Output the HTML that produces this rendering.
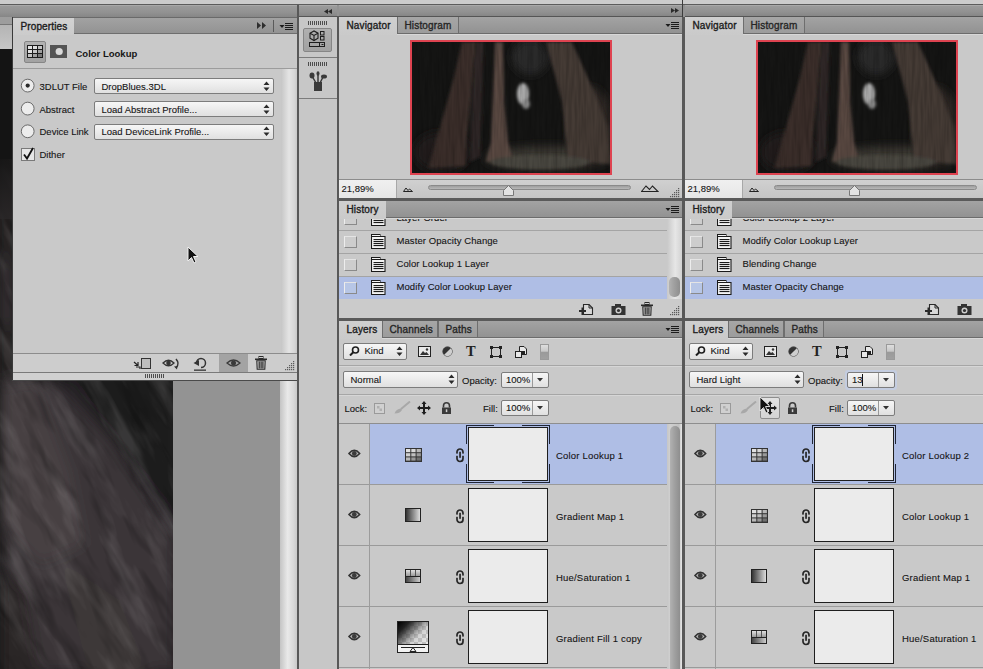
<!DOCTYPE html>
<html><head><meta charset="utf-8"><style>
html,body{margin:0;padding:0;width:983px;height:669px;overflow:hidden;position:relative;font-family:"Liberation Sans", sans-serif;}
.t{position:absolute;white-space:nowrap;}
</style></head><body>
<div style="position:absolute;left:0px;top:0px;width:983px;height:669px;background:#929292"></div><div style="position:absolute;left:0px;top:0px;width:983px;height:4px;background:#cccccc"></div><div style="position:absolute;left:0px;top:4px;width:983px;height:1px;background:#5c5c5c"></div><div style="position:absolute;left:0px;top:5px;width:297px;height:12px;background:linear-gradient(#b0b0b0 0px,#9a9a9a 1.5px,#929292 60%,#868686 100%)"></div><div style="position:absolute;left:0px;top:17px;width:12px;height:7px;background:#9d9d9d"></div><div style="position:absolute;left:0px;top:24px;width:12px;height:1px;background:#777"></div><div style="position:absolute;left:0px;top:25px;width:12px;height:24px;background:linear-gradient(#b4b4b4,#c6c6c6)"></div><div style="position:absolute;left:0px;top:49px;width:173px;height:620px;overflow:hidden"><svg width="173" height="620" viewBox="0 0 173 620" style="position:absolute;left:0;top:0"><defs><filter id="bb" x="-30%" y="-30%" width="160%" height="160%"><feGaussianBlur stdDeviation="7"/></filter><filter id="tx" x="0" y="0" width="100%" height="100%"><feTurbulence type="fractalNoise" baseFrequency="0.012 0.05" numOctaves="4" seed="11"/><feColorMatrix type="matrix" values="0 0 0 0 0.75  0 0 0 0 0.72  0 0 0 0 0.73  0 0 0 -3 1.55"/></filter><filter id="tx2" x="0" y="0" width="100%" height="100%"><feTurbulence type="fractalNoise" baseFrequency="0.015 0.07" numOctaves="3" seed="5"/><feColorMatrix type="matrix" values="0 0 0 0 0  0 0 0 0 0  0 0 0 0 0  0 0 0 -3 1.5"/></filter><linearGradient id="fadeTop" x1="0" y1="0" x2="0" y2="1"><stop offset="0" stop-color="#141414"/><stop offset="1" stop-color="#2a2728"/></linearGradient></defs><rect width="173" height="620" fill="#141414"/><g filter="url(#bb)"><polygon points="0,101 14,101 14,331 0,331" fill="#2e2b2c"/><polygon points="0,201 14,221 14,281 0,271" fill="#3a3637"/><polygon points="0,329 180,329 180,631 0,631" fill="#272425"/><polygon points="0,329 50,329 110,391 176,491 176,620 40,620 20,541 0,511" fill="#3a3638"/><polygon points="0,341 35,329 70,421 85,496 40,516 0,471" fill="#464143"/><polygon points="65,321 180,321 180,471 120,401" fill="#1f1d1e"/><polygon points="0,521 25,541 40,631 0,631" fill="#2a2728"/><polygon points="60,511 120,551 150,631 90,631" fill="#3c3739"/></g><g transform="rotate(62 86 450)"><rect x="-300" y="0" width="800" height="900" filter="url(#tx)" opacity="0.14"/><rect x="-300" y="0" width="800" height="900" filter="url(#tx2)" opacity="0.25"/></g><rect x="0" y="0" width="173" height="110" fill="#141414"/><rect x="0" y="110" width="173" height="60" fill="url(#fadeTop)" opacity="0.8"/></svg></div><div style="position:absolute;left:173px;top:380px;width:107px;height:289px;background:#939393"></div><div style="position:absolute;left:280px;top:380px;width:17px;height:289px;background:linear-gradient(90deg,#c4c4c4,#e9e9e9 45%,#d8d8d8 80%,#c9c9c9)"></div><div style="position:absolute;left:12px;top:17px;width:1px;height:364px;background:#3a3a3a"></div><div style="position:absolute;left:13px;top:17px;width:284px;height:363px;background:#c9c9c9"></div><div style="position:absolute;left:13px;top:17px;width:284px;height:17px;background:linear-gradient(#a3a3a3,#929292)"></div><div style="position:absolute;left:13px;top:33px;width:284px;height:1px;background:#6e6e6e"></div><div style="position:absolute;left:13px;top:17px;width:284px;height:1px;background:#6a6a6a"></div><div style="position:absolute;left:13px;top:18px;width:61px;height:17px;background:linear-gradient(#d2d2d2,#cbcbcb)"></div><div class="t" style="left:20.50px;top:21.54px;font-size:10px;line-height:10px;font-weight:normal;color:#1c1c1c;letter-spacing:0.12px;-webkit-text-stroke:0.35px #1c1c1c;">Properties</div><svg style="position:absolute;left:256px;top:21px" width="12" height="10" viewBox="0 0 12 10"><path d="M1 1 L5 4.5 L1 8 Z M6 1 L10 4.5 L6 8 Z" fill="#2e2e2e"/></svg><div style="position:absolute;left:273px;top:20px;width:1px;height:12px;background:#5a5a5a"></div><svg style="position:absolute;left:279px;top:23px" width="14" height="9" viewBox="0 0 14 9"><path d="M0.5 2 L5.5 2 L3 5 Z" fill="#1c1c1c"/><rect x="6" y="0" width="8" height="1" fill="#1c1c1c"/><rect x="6" y="2" width="8" height="1" fill="#1c1c1c"/><rect x="6" y="4" width="8" height="1" fill="#1c1c1c"/><rect x="6" y="6" width="8" height="1" fill="#1c1c1c"/></svg><div style="position:absolute;left:24px;top:41px;width:22px;height:22px;background:linear-gradient(#b2b2b2,#a2a2a2);border:1px solid #868686;border-radius:2px;box-sizing:border-box"></div><svg style="position:absolute;left:27px;top:45px" width="16" height="13" viewBox="0 0 16 13"><rect x="0" y="0" width="16" height="13" fill="#1c1c1c"/><rect x="1" y="1" width="4" height="3" fill="#e4e4e4"/><rect x="6" y="1" width="4" height="3" fill="#e0e0e0"/><rect x="11" y="1" width="4" height="3" fill="#c4c4c4"/><rect x="1" y="5" width="4" height="3" fill="#e0e0e0"/><rect x="6" y="5" width="4" height="3" fill="#c4c4c4"/><rect x="11" y="5" width="4" height="3" fill="#a0a0a0"/><rect x="1" y="9" width="4" height="3" fill="#c4c4c4"/><rect x="6" y="9" width="4" height="3" fill="#a0a0a0"/><rect x="11" y="9" width="4" height="3" fill="#7a7a7a"/></svg><div style="position:absolute;left:50px;top:45px;width:17px;height:13px;background:#545454"></div><svg style="position:absolute;left:50px;top:45px" width="17" height="13" viewBox="0 0 17 13"><circle cx="9.2" cy="6.5" r="3.6" fill="#dadada"/></svg><div class="t" style="left:75.50px;top:49.46px;font-size:9.5px;line-height:9.5px;font-weight:bold;color:#161616;">Color Lookup</div><div style="position:absolute;left:13px;top:68px;width:284px;height:1px;background:#9c9c9c"></div><div style="position:absolute;left:281px;top:69px;width:16px;height:284px;background:linear-gradient(90deg,#c6c6c6,#e4e4e4 50%,#d6d6d6 85%,#c8c8c8)"></div><svg style="position:absolute;left:20px;top:77px" width="16" height="16" viewBox="0 0 16 16"><circle cx="7.7" cy="8.6" r="6.4" fill="#ececec" stroke="#6a6a6a" stroke-width="1"/><circle cx="7.7" cy="8.6" r="2.1" fill="#2a2a2a"/></svg><div class="t" style="left:39.50px;top:81.76px;font-size:9.5px;line-height:9.5px;font-weight:normal;color:#141414;-webkit-text-stroke:0.1px #141414;">3DLUT File</div><div style="position:absolute;left:94px;top:78px;width:180px;height:16px;background:linear-gradient(#f6f6f6,#e0e0e0);border:1px solid #7c7c7c;border-radius:2px;box-sizing:border-box"></div><div class="t" style="left:101.50px;top:81.76px;font-size:9.5px;line-height:9.5px;font-weight:normal;color:#141414;-webkit-text-stroke:0.1px #141414;">DropBlues.3DL</div><svg style="position:absolute;left:263px;top:81px" width="7" height="11" viewBox="0 0 7 11"><path d="M0.5 4 L3.5 0.5 L6.5 4 Z M0.5 6.5 L6.5 6.5 L3.5 10 Z" fill="#2a2a2a"/></svg><svg style="position:absolute;left:20px;top:100px" width="16" height="16" viewBox="0 0 16 16"><circle cx="7.7" cy="8.6" r="6.4" fill="#ececec" stroke="#6a6a6a" stroke-width="1"/></svg><div class="t" style="left:39.50px;top:104.76px;font-size:9.5px;line-height:9.5px;font-weight:normal;color:#141414;-webkit-text-stroke:0.1px #141414;">Abstract</div><div style="position:absolute;left:94px;top:101px;width:180px;height:16px;background:linear-gradient(#f6f6f6,#e0e0e0);border:1px solid #7c7c7c;border-radius:2px;box-sizing:border-box"></div><div class="t" style="left:101.50px;top:104.76px;font-size:9.5px;line-height:9.5px;font-weight:normal;color:#141414;-webkit-text-stroke:0.1px #141414;">Load Abstract Profile...</div><svg style="position:absolute;left:263px;top:104px" width="7" height="11" viewBox="0 0 7 11"><path d="M0.5 4 L3.5 0.5 L6.5 4 Z M0.5 6.5 L6.5 6.5 L3.5 10 Z" fill="#2a2a2a"/></svg><svg style="position:absolute;left:20px;top:123px" width="16" height="16" viewBox="0 0 16 16"><circle cx="7.7" cy="8.3" r="6.4" fill="#ececec" stroke="#6a6a6a" stroke-width="1"/></svg><div class="t" style="left:39.50px;top:127.46px;font-size:9.5px;line-height:9.5px;font-weight:normal;color:#141414;-webkit-text-stroke:0.1px #141414;">Device Link</div><div style="position:absolute;left:94px;top:124px;width:180px;height:16px;background:linear-gradient(#f6f6f6,#e0e0e0);border:1px solid #7c7c7c;border-radius:2px;box-sizing:border-box"></div><div class="t" style="left:101.50px;top:127.46px;font-size:9.5px;line-height:9.5px;font-weight:normal;color:#141414;-webkit-text-stroke:0.1px #141414;">Load DeviceLink Profile...</div><svg style="position:absolute;left:263px;top:126px" width="7" height="11" viewBox="0 0 7 11"><path d="M0.5 4 L3.5 0.5 L6.5 4 Z M0.5 6.5 L6.5 6.5 L3.5 10 Z" fill="#2a2a2a"/></svg><svg style="position:absolute;left:20px;top:147px" width="16" height="15" viewBox="0 0 16 15"><rect x="1.5" y="1.5" width="13" height="12" fill="#e6e6e6" stroke="#7a7a7a"/><path d="M4 7.5 L7 11.5 L13 1" stroke="#111" stroke-width="1.8" fill="none"/></svg><div class="t" style="left:39.50px;top:149.96px;font-size:9.5px;line-height:9.5px;font-weight:normal;color:#141414;-webkit-text-stroke:0.1px #141414;">Dither</div><div style="position:absolute;left:13px;top:353px;width:284px;height:1px;background:#8c8c8c"></div><div style="position:absolute;left:13px;top:354px;width:284px;height:18px;background:#cdcdcd"></div><div style="position:absolute;left:219px;top:354px;width:29px;height:18px;background:#a3a3a3"></div><div style="position:absolute;left:13px;top:372px;width:284px;height:1px;background:#7a7a7a"></div><div style="position:absolute;left:13px;top:373px;width:284px;height:7px;background:#d0d0d0"></div><div style="position:absolute;left:12px;top:380px;width:285px;height:1px;background:#4a4a4a"></div><svg style="position:absolute;left:145px;top:374px" width="20" height="5" viewBox="0 0 20 5"><rect x="0" y="0" width="1" height="4" fill="#4e4e4e"/><rect x="2" y="0" width="1" height="4" fill="#4e4e4e"/><rect x="4" y="0" width="1" height="4" fill="#4e4e4e"/><rect x="6" y="0" width="1" height="4" fill="#4e4e4e"/><rect x="8" y="0" width="1" height="4" fill="#4e4e4e"/><rect x="10" y="0" width="1" height="4" fill="#4e4e4e"/><rect x="12" y="0" width="1" height="4" fill="#4e4e4e"/><rect x="14" y="0" width="1" height="4" fill="#4e4e4e"/><rect x="16" y="0" width="1" height="4" fill="#4e4e4e"/><rect x="18" y="0" width="1" height="4" fill="#4e4e4e"/></svg><svg style="position:absolute;left:133px;top:357px" width="19" height="13" viewBox="0 0 19 13"><rect x="8.5" y="1.5" width="9" height="10" fill="#bdbdbd" stroke="#333"/><path d="M1 5 L5 8.5 M5 5 L5 8.5 L1.5 8.5 M3 10 L7 10 L7 12" stroke="#222" stroke-width="1.2" fill="none"/></svg><svg style="position:absolute;left:162px;top:357px" width="20" height="13" viewBox="0 0 20 13"><path d="M1 6 Q6.5 0.5 12 6 Q6.5 11.5 1 6 Z" fill="none" stroke="#333" stroke-width="1.3"/><circle cx="6.5" cy="6" r="2.3" fill="#333"/><path d="M14 2 Q18 6.5 14 11" stroke="#333" stroke-width="1.5" fill="none"/><path d="M12 9.5 L15 12.5 L15.5 9 Z" fill="#333"/></svg><svg style="position:absolute;left:193px;top:356px" width="15" height="16" viewBox="0 0 15 16"><path d="M3.5 7 A4.5 4.5 0 1 1 8 11.5" stroke="#333" stroke-width="1.5" fill="none"/><path d="M0.5 7 L6 4 L6 10 Z" fill="#333"/><rect x="1" y="13.5" width="12" height="1.3" fill="#333"/></svg><svg style="position:absolute;left:226px;top:358px" width="15" height="10" viewBox="0 0 15 10"><path d="M1 5 Q7.5 -1 14 5 Q7.5 11 1 5 Z" fill="none" stroke="#3a3a3a" stroke-width="1.3"/><circle cx="7.5" cy="5" r="2.5" fill="#3a3a3a"/></svg><svg style="position:absolute;left:255px;top:356px" width="12" height="14" viewBox="0 0 12 14"><rect x="4" y="0.5" width="4" height="2" fill="none" stroke="#2a2a2a" stroke-width="1"/><rect x="0" y="2.5" width="12" height="1.6" fill="#2a2a2a"/><path d="M1.8 4.8 H10.2 L9.8 13.2 H2.2 Z" fill="none" stroke="#2a2a2a" stroke-width="1.1"/><rect x="3.6" y="5.5" width="1.2" height="7" fill="#2a2a2a"/><rect x="5.5" y="5.5" width="1.2" height="7" fill="#2a2a2a"/><rect x="7.3" y="5.5" width="1.2" height="7" fill="#2a2a2a"/></svg><svg style="position:absolute;left:284px;top:360px" width="12" height="11" viewBox="0 0 12 11"><rect x="1" y="9" width="1.2" height="1.2" fill="#5a5a5a"/><rect x="3" y="7" width="1.2" height="1.2" fill="#5a5a5a"/><rect x="3" y="9" width="1.2" height="1.2" fill="#5a5a5a"/><rect x="5" y="5" width="1.2" height="1.2" fill="#5a5a5a"/><rect x="5" y="7" width="1.2" height="1.2" fill="#5a5a5a"/><rect x="5" y="9" width="1.2" height="1.2" fill="#5a5a5a"/><rect x="7" y="3" width="1.2" height="1.2" fill="#5a5a5a"/><rect x="7" y="5" width="1.2" height="1.2" fill="#5a5a5a"/><rect x="7" y="7" width="1.2" height="1.2" fill="#5a5a5a"/><rect x="7" y="9" width="1.2" height="1.2" fill="#5a5a5a"/><rect x="9" y="1" width="1.2" height="1.2" fill="#5a5a5a"/><rect x="9" y="3" width="1.2" height="1.2" fill="#5a5a5a"/><rect x="9" y="5" width="1.2" height="1.2" fill="#5a5a5a"/><rect x="9" y="7" width="1.2" height="1.2" fill="#5a5a5a"/><rect x="9" y="9" width="1.2" height="1.2" fill="#5a5a5a"/></svg><div style="position:absolute;left:297px;top:5px;width:2px;height:664px;background:#585858"></div><div style="position:absolute;left:299px;top:5px;width:38px;height:11px;background:linear-gradient(#b0b0b0 0px,#9a9a9a 1.5px,#929292 60%,#868686 100%)"></div><div style="position:absolute;left:299px;top:16px;width:38px;height:1px;background:#555"></div><div style="position:absolute;left:299px;top:17px;width:38px;height:652px;background:#c7c7c7"></div><div style="position:absolute;left:337px;top:16px;width:2px;height:653px;background:#585858"></div><svg style="position:absolute;left:324px;top:9px" width="9" height="5" viewBox="0 0 9 5"><path d="M0 2.5 L4 0 L4 5 Z M4 2.5 L8 0 L8 5 Z" fill="#2a2a2a"/></svg><svg style="position:absolute;left:308px;top:21px" width="20" height="5" viewBox="0 0 20 5"><rect x="0" y="0" width="1" height="4" fill="#4e4e4e"/><rect x="2" y="0" width="1" height="4" fill="#4e4e4e"/><rect x="4" y="0" width="1" height="4" fill="#4e4e4e"/><rect x="6" y="0" width="1" height="4" fill="#4e4e4e"/><rect x="8" y="0" width="1" height="4" fill="#4e4e4e"/><rect x="10" y="0" width="1" height="4" fill="#4e4e4e"/><rect x="12" y="0" width="1" height="4" fill="#4e4e4e"/><rect x="14" y="0" width="1" height="4" fill="#4e4e4e"/><rect x="16" y="0" width="1" height="4" fill="#4e4e4e"/><rect x="18" y="0" width="1" height="4" fill="#4e4e4e"/></svg><div style="position:absolute;left:303px;top:28px;width:29px;height:24px;background:linear-gradient(#b0b0b0,#a2a2a2);border:1px solid #868686;border-radius:2px;box-sizing:border-box"></div><svg style="position:absolute;left:306px;top:30px" width="23" height="20" viewBox="0 0 23 20"><path d="M4 3.2 L8 1 L12 3.2 L12 8.2 L8 10.5 L4 8.2 Z" fill="none" stroke="#1e1e1e" stroke-width="1.1"/><path d="M4 3.2 L8 5.4 L12 3.2 M8 5.4 L8 10.5" stroke="#1e1e1e" stroke-width="1.1" fill="none"/><rect x="14.5" y="1.5" width="3.5" height="3.5" fill="none" stroke="#1e1e1e"/><rect x="14.5" y="6.5" width="3.5" height="3.5" fill="none" stroke="#1e1e1e"/><rect x="3.5" y="12.5" width="15" height="4" fill="none" stroke="#1e1e1e"/><rect x="13" y="13" width="1" height="3" fill="#1e1e1e"/><rect x="15.5" y="14" width="2" height="1" fill="#1e1e1e"/></svg><div style="position:absolute;left:299px;top:57px;width:38px;height:1px;background:#7c7c7c"></div><svg style="position:absolute;left:308px;top:62px" width="20" height="5" viewBox="0 0 20 5"><rect x="0" y="0" width="1" height="4" fill="#4e4e4e"/><rect x="2" y="0" width="1" height="4" fill="#4e4e4e"/><rect x="4" y="0" width="1" height="4" fill="#4e4e4e"/><rect x="6" y="0" width="1" height="4" fill="#4e4e4e"/><rect x="8" y="0" width="1" height="4" fill="#4e4e4e"/><rect x="10" y="0" width="1" height="4" fill="#4e4e4e"/><rect x="12" y="0" width="1" height="4" fill="#4e4e4e"/><rect x="14" y="0" width="1" height="4" fill="#4e4e4e"/><rect x="16" y="0" width="1" height="4" fill="#4e4e4e"/><rect x="18" y="0" width="1" height="4" fill="#4e4e4e"/></svg><svg style="position:absolute;left:308px;top:71px" width="21" height="21" viewBox="0 0 21 21"><rect x="6" y="11" width="8" height="9" fill="#3a3a3a"/><path d="M8 12 L4 5 M10 12 L10 3 M12 12 L15 6" stroke="#3a3a3a" stroke-width="1.5"/><ellipse cx="4" cy="4.5" rx="2.5" ry="3" fill="#3a3a3a"/><ellipse cx="10" cy="2.5" rx="1.5" ry="2.2" fill="#3a3a3a"/><ellipse cx="16" cy="5.5" rx="3" ry="2" fill="#3a3a3a"/></svg><div style="position:absolute;left:299px;top:98px;width:38px;height:1px;background:#7c7c7c"></div><div style="position:absolute;left:682px;top:0px;width:1px;height:17px;background:#3c3c3c"></div><div style="position:absolute;left:682px;top:17px;width:3px;height:652px;background:#585858"></div><div style="position:absolute;left:339px;top:5px;width:343px;height:11px;background:linear-gradient(#b0b0b0 0px,#9a9a9a 1.5px,#929292 60%,#868686 100%)"></div><div style="position:absolute;left:339px;top:16px;width:343px;height:1px;background:#555"></div><div style="position:absolute;left:339px;top:17px;width:343px;height:162px;background:#c9c9c9"></div><div style="position:absolute;left:339px;top:17px;width:343px;height:16px;background:linear-gradient(#a3a3a3,#929292)"></div><div style="position:absolute;left:339px;top:33px;width:343px;height:1px;background:#6c6c6c"></div><div style="position:absolute;left:339px;top:34px;width:343px;height:1px;background:#d8d8d8"></div><div style="position:absolute;left:339px;top:17px;width:58px;height:18px;background:linear-gradient(#cfcfcf,#cacaca)"></div><div class="t" style="left:346.50px;top:20.84px;font-size:10px;line-height:10px;font-weight:normal;color:#1c1c1c;letter-spacing:0.15px;-webkit-text-stroke:0.35px #1c1c1c;">Navigator</div><div style="position:absolute;left:397px;top:17px;width:62px;height:17px;background:linear-gradient(#a6a6a6,#9c9c9c);border-left:1px solid #6e6e6e;border-right:1px solid #6e6e6e;border-bottom:1px solid #6c6c6c;box-sizing:border-box"></div><div class="t" style="left:404.50px;top:20.84px;font-size:10px;line-height:10px;font-weight:normal;color:#262626;letter-spacing:0.15px;-webkit-text-stroke:0.35px #262626;">Histogram</div><svg style="position:absolute;left:671px;top:8px" width="9" height="6" viewBox="0 0 9 6"><path d="M0 0 L4 2.5 L0 5 Z M4 0 L8 2.5 L4 5 Z" fill="#2a2a2a"/></svg><svg style="position:absolute;left:665px;top:22px" width="14" height="9" viewBox="0 0 14 9"><path d="M0.5 2 L5.5 2 L3 5 Z" fill="#1c1c1c"/><rect x="6" y="0" width="8" height="1" fill="#1c1c1c"/><rect x="6" y="2" width="8" height="1" fill="#1c1c1c"/><rect x="6" y="4" width="8" height="1" fill="#1c1c1c"/><rect x="6" y="6" width="8" height="1" fill="#1c1c1c"/></svg><div style="position:absolute;left:409.5px;top:39.5px;width:202px;height:135px;background:#161615;border:2px solid #de4350;box-sizing:border-box;overflow:hidden"><svg width="198" height="131" viewBox="0 0 198 131" style="position:absolute;left:0;top:0"><defs><filter id="nb" x="-20%" y="-20%" width="140%" height="140%"><feGaussianBlur stdDeviation="1.4"/></filter><filter id="nb2" x="-30%" y="-30%" width="160%" height="160%"><feGaussianBlur stdDeviation="4"/></filter></defs><rect width="198" height="131" fill="#151514"/><g filter="url(#nb2)"><ellipse cx="118" cy="15" rx="18" ry="18" fill="#29292a"/><ellipse cx="135" cy="116" rx="62" ry="12" fill="#3a3733"/><ellipse cx="30" cy="110" rx="28" ry="20" fill="#221e1c"/><ellipse cx="178" cy="85" rx="22" ry="40" fill="#332b28"/></g><g filter="url(#nb)"><polygon points="50,0 64,0 60,45 55,95 54,124 16,126 28,85 42,35" fill="#3a2f2a"/><polygon points="64,0 72,0 70,60 68,115 58,120 60,60" fill="#2e2825"/><polygon points="83,0 91,0 92,60 96,100 101,118 74,120 79,100 81,50" fill="#5a4942"/><polygon points="134,0 160,0 180,45 196,85 198,122 156,118 150,60" fill="#443a36"/><ellipse cx="111" cy="52" rx="6" ry="11" fill="#b4b4b4"/><ellipse cx="114" cy="62" rx="4" ry="5" fill="#8c8c8c"/><ellipse cx="128" cy="120" rx="50" ry="7" fill="#4a463f"/></g><filter id="ns" x="0" y="0" width="100%" height="100%"><feTurbulence type="fractalNoise" baseFrequency="0.35 0.03" numOctaves="2" seed="3"/><feColorMatrix type="matrix" values="0 0 0 0 0  0 0 0 0 0  0 0 0 0 0  0 0 0 -1.6 1.1"/></filter><rect width="198" height="131" filter="url(#ns)" opacity="0.22"/></svg></div><div style="position:absolute;left:339px;top:179px;width:343px;height:1px;background:#8c8c8c"></div><div style="position:absolute;left:339px;top:180px;width:343px;height:18px;background:linear-gradient(#d0d0d0,#c4c4c4)"></div><div style="position:absolute;left:339px;top:180px;width:57px;height:18px;background:linear-gradient(#f0f0f0,#e6e6e6)"></div><div style="position:absolute;left:396px;top:180px;width:1px;height:18px;background:#a8a8a8"></div><div class="t" style="left:341.50px;top:184.26px;font-size:9.5px;line-height:9.5px;font-weight:normal;color:#141414;-webkit-text-stroke:0.1px #141414;">21,89%</div><svg style="position:absolute;left:403px;top:187px" width="10" height="5" viewBox="0 0 10 5"><path d="M0.5 4.5 L3 1 L5 3.5 L6.5 2 L9.5 4.5 Z" fill="none" stroke="#222" stroke-width="1"/></svg><div style="position:absolute;left:428px;top:185px;width:203px;height:5px;background:linear-gradient(#9e9e9e,#b8b8b8);border:1px solid #8a8a8a;border-radius:3px;box-sizing:border-box"></div><svg style="position:absolute;left:503px;top:185px" width="11" height="11" viewBox="0 0 11 11"><path d="M0.5 10.5 L0.5 5.5 L5.5 0.5 L10.5 5.5 L10.5 10.5 Z" fill="#e2e2e2" stroke="#777"/></svg><svg style="position:absolute;left:641px;top:185px" width="18" height="7" viewBox="0 0 18 7"><path d="M0.5 6.5 L5 1 L8.5 4.5 L11.5 1 L17 6.5 Z" fill="none" stroke="#222" stroke-width="1.1"/></svg><svg style="position:absolute;left:669px;top:187px" width="12" height="11" viewBox="0 0 12 11"><rect x="1" y="9" width="1.2" height="1.2" fill="#5a5a5a"/><rect x="3" y="7" width="1.2" height="1.2" fill="#5a5a5a"/><rect x="3" y="9" width="1.2" height="1.2" fill="#5a5a5a"/><rect x="5" y="5" width="1.2" height="1.2" fill="#5a5a5a"/><rect x="5" y="7" width="1.2" height="1.2" fill="#5a5a5a"/><rect x="5" y="9" width="1.2" height="1.2" fill="#5a5a5a"/><rect x="7" y="3" width="1.2" height="1.2" fill="#5a5a5a"/><rect x="7" y="5" width="1.2" height="1.2" fill="#5a5a5a"/><rect x="7" y="7" width="1.2" height="1.2" fill="#5a5a5a"/><rect x="7" y="9" width="1.2" height="1.2" fill="#5a5a5a"/><rect x="9" y="1" width="1.2" height="1.2" fill="#5a5a5a"/><rect x="9" y="3" width="1.2" height="1.2" fill="#5a5a5a"/><rect x="9" y="5" width="1.2" height="1.2" fill="#5a5a5a"/><rect x="9" y="7" width="1.2" height="1.2" fill="#5a5a5a"/><rect x="9" y="9" width="1.2" height="1.2" fill="#5a5a5a"/></svg><div style="position:absolute;left:339px;top:198px;width:343px;height:3px;background:#5a5a5a"></div><div style="position:absolute;left:339px;top:201px;width:343px;height:98px;background:#c9c9c9"></div><div style="position:absolute;left:339px;top:230px;width:328px;height:1px;background:#a4a4a4"></div><div style="position:absolute;left:344px;top:212.5px;width:13px;height:12px;background:#cdcdcd;border-left:1px solid #ededed;border-top:1px solid #e4e4e4;border-right:1px solid #8a8a8a;border-bottom:1px solid #8a8a8a;box-sizing:border-box"></div><svg style="position:absolute;left:371px;top:211px" width="15" height="16" viewBox="0 0 15 16"><path d="M0.5 2.5 H14 V14.5 H0.5 Z" fill="#f4f4f4" stroke="#1a1a1a" stroke-width="1.1"/><rect x="0.5" y="0.5" width="8.5" height="2" fill="#f4f4f4" stroke="#1a1a1a" stroke-width="1"/><rect x="2.5" y="5" width="10" height="1.1" fill="#1a1a1a"/><rect x="2.5" y="7" width="10" height="1.1" fill="#1a1a1a"/><rect x="2.5" y="9" width="10" height="1.1" fill="#1a1a1a"/><rect x="2.5" y="11" width="10" height="1.1" fill="#1a1a1a"/></svg><div class="t" style="left:396.50px;top:212.96px;font-size:9.5px;line-height:9.5px;font-weight:normal;color:#141414;letter-spacing:0.08px;-webkit-text-stroke:0.1px #141414;">Layer Order</div><div style="position:absolute;left:339px;top:253px;width:328px;height:1px;background:#a4a4a4"></div><div style="position:absolute;left:344px;top:235.5px;width:13px;height:12px;background:#cdcdcd;border-left:1px solid #ededed;border-top:1px solid #e4e4e4;border-right:1px solid #8a8a8a;border-bottom:1px solid #8a8a8a;box-sizing:border-box"></div><svg style="position:absolute;left:371px;top:234px" width="15" height="16" viewBox="0 0 15 16"><path d="M0.5 2.5 H14 V14.5 H0.5 Z" fill="#f4f4f4" stroke="#1a1a1a" stroke-width="1.1"/><rect x="0.5" y="0.5" width="8.5" height="2" fill="#f4f4f4" stroke="#1a1a1a" stroke-width="1"/><rect x="2.5" y="5" width="10" height="1.1" fill="#1a1a1a"/><rect x="2.5" y="7" width="10" height="1.1" fill="#1a1a1a"/><rect x="2.5" y="9" width="10" height="1.1" fill="#1a1a1a"/><rect x="2.5" y="11" width="10" height="1.1" fill="#1a1a1a"/></svg><div class="t" style="left:396.50px;top:235.96px;font-size:9.5px;line-height:9.5px;font-weight:normal;color:#141414;letter-spacing:0.08px;-webkit-text-stroke:0.1px #141414;">Master Opacity Change</div><div style="position:absolute;left:339px;top:276px;width:328px;height:1px;background:#a4a4a4"></div><div style="position:absolute;left:344px;top:258.5px;width:13px;height:12px;background:#cdcdcd;border-left:1px solid #ededed;border-top:1px solid #e4e4e4;border-right:1px solid #8a8a8a;border-bottom:1px solid #8a8a8a;box-sizing:border-box"></div><svg style="position:absolute;left:371px;top:257px" width="15" height="16" viewBox="0 0 15 16"><path d="M0.5 2.5 H14 V14.5 H0.5 Z" fill="#f4f4f4" stroke="#1a1a1a" stroke-width="1.1"/><rect x="0.5" y="0.5" width="8.5" height="2" fill="#f4f4f4" stroke="#1a1a1a" stroke-width="1"/><rect x="2.5" y="5" width="10" height="1.1" fill="#1a1a1a"/><rect x="2.5" y="7" width="10" height="1.1" fill="#1a1a1a"/><rect x="2.5" y="9" width="10" height="1.1" fill="#1a1a1a"/><rect x="2.5" y="11" width="10" height="1.1" fill="#1a1a1a"/></svg><div class="t" style="left:396.50px;top:258.96px;font-size:9.5px;line-height:9.5px;font-weight:normal;color:#141414;letter-spacing:0.08px;-webkit-text-stroke:0.1px #141414;">Color Lookup 1 Layer</div><div style="position:absolute;left:339px;top:277px;width:328px;height:22px;background:#afbee5"></div><div style="position:absolute;left:339px;top:299px;width:328px;height:1px;background:#a4a4a4"></div><div style="position:absolute;left:344px;top:281.5px;width:13px;height:12px;background:#b7c6e6;border-left:1px solid #ededed;border-top:1px solid #e4e4e4;border-right:1px solid #8a8a8a;border-bottom:1px solid #8a8a8a;box-sizing:border-box"></div><svg style="position:absolute;left:371px;top:280px" width="15" height="16" viewBox="0 0 15 16"><path d="M0.5 2.5 H14 V14.5 H0.5 Z" fill="#f4f4f4" stroke="#1a1a1a" stroke-width="1.1"/><rect x="0.5" y="0.5" width="8.5" height="2" fill="#f4f4f4" stroke="#1a1a1a" stroke-width="1"/><rect x="2.5" y="5" width="10" height="1.1" fill="#1a1a1a"/><rect x="2.5" y="7" width="10" height="1.1" fill="#1a1a1a"/><rect x="2.5" y="9" width="10" height="1.1" fill="#1a1a1a"/><rect x="2.5" y="11" width="10" height="1.1" fill="#1a1a1a"/></svg><div class="t" style="left:396.50px;top:281.96px;font-size:9.5px;line-height:9.5px;font-weight:normal;color:#141414;letter-spacing:0.08px;-webkit-text-stroke:0.1px #141414;">Modify Color Lookup Layer</div><div style="position:absolute;left:339px;top:201px;width:343px;height:16px;background:linear-gradient(#a3a3a3,#929292)"></div><div style="position:absolute;left:339px;top:217px;width:343px;height:1px;background:#6c6c6c"></div><div style="position:absolute;left:339px;top:218px;width:343px;height:1px;background:#d8d8d8"></div><div style="position:absolute;left:339px;top:201px;width:47px;height:18px;background:linear-gradient(#cfcfcf,#cacaca)"></div><div class="t" style="left:346.50px;top:204.84px;font-size:10px;line-height:10px;font-weight:normal;color:#1c1c1c;letter-spacing:0.15px;-webkit-text-stroke:0.35px #1c1c1c;">History</div><svg style="position:absolute;left:665px;top:206px" width="14" height="9" viewBox="0 0 14 9"><path d="M0.5 2 L5.5 2 L3 5 Z" fill="#1c1c1c"/><rect x="6" y="0" width="8" height="1" fill="#1c1c1c"/><rect x="6" y="2" width="8" height="1" fill="#1c1c1c"/><rect x="6" y="4" width="8" height="1" fill="#1c1c1c"/><rect x="6" y="6" width="8" height="1" fill="#1c1c1c"/></svg><div style="position:absolute;left:667px;top:219px;width:15px;height:80px;background:linear-gradient(90deg,#c8c8c8,#e6e6e6 55%,#d2d2d2)"></div><div style="position:absolute;left:669px;top:277px;width:11px;height:20px;background:linear-gradient(90deg,#b2b2b2,#a2a2a2 40%,#8e8e8e);border-radius:5px"></div><div style="position:absolute;left:339px;top:299px;width:343px;height:19px;background:#cbcbcb"></div><svg style="position:absolute;left:578.5px;top:304px" width="15" height="12" viewBox="0 0 15 12"><path d="M4.5 0.5 H10 L13.5 4 V10.5 H4.5 Z" fill="#d8d8d8" stroke="#2a2a2a" stroke-width="1.1"/><path d="M10 0.5 V4 H13.5" fill="none" stroke="#2a2a2a" stroke-width="1"/><path d="M0 7 H7 M3.5 3.5 V11" stroke="#2a2a2a" stroke-width="2"/></svg><svg style="position:absolute;left:611px;top:304px" width="15" height="11" viewBox="0 0 15 11"><rect x="0.5" y="2" width="14" height="9" fill="#333"/><rect x="4" y="0" width="6" height="3" fill="#333"/><circle cx="7.5" cy="6.5" r="3" fill="#d0d0d0"/><circle cx="7.5" cy="6.5" r="1.6" fill="#333"/></svg><svg style="position:absolute;left:641px;top:302px" width="12" height="14" viewBox="0 0 12 14"><rect x="4" y="0.5" width="4" height="2" fill="none" stroke="#2a2a2a" stroke-width="1"/><rect x="0" y="2.5" width="12" height="1.6" fill="#2a2a2a"/><path d="M1.8 4.8 H10.2 L9.8 13.2 H2.2 Z" fill="none" stroke="#2a2a2a" stroke-width="1.1"/><rect x="3.6" y="5.5" width="1.2" height="7" fill="#2a2a2a"/><rect x="5.5" y="5.5" width="1.2" height="7" fill="#2a2a2a"/><rect x="7.3" y="5.5" width="1.2" height="7" fill="#2a2a2a"/></svg><svg style="position:absolute;left:669px;top:305px" width="12" height="11" viewBox="0 0 12 11"><rect x="1" y="9" width="1.2" height="1.2" fill="#5a5a5a"/><rect x="3" y="7" width="1.2" height="1.2" fill="#5a5a5a"/><rect x="3" y="9" width="1.2" height="1.2" fill="#5a5a5a"/><rect x="5" y="5" width="1.2" height="1.2" fill="#5a5a5a"/><rect x="5" y="7" width="1.2" height="1.2" fill="#5a5a5a"/><rect x="5" y="9" width="1.2" height="1.2" fill="#5a5a5a"/><rect x="7" y="3" width="1.2" height="1.2" fill="#5a5a5a"/><rect x="7" y="5" width="1.2" height="1.2" fill="#5a5a5a"/><rect x="7" y="7" width="1.2" height="1.2" fill="#5a5a5a"/><rect x="7" y="9" width="1.2" height="1.2" fill="#5a5a5a"/><rect x="9" y="1" width="1.2" height="1.2" fill="#5a5a5a"/><rect x="9" y="3" width="1.2" height="1.2" fill="#5a5a5a"/><rect x="9" y="5" width="1.2" height="1.2" fill="#5a5a5a"/><rect x="9" y="7" width="1.2" height="1.2" fill="#5a5a5a"/><rect x="9" y="9" width="1.2" height="1.2" fill="#5a5a5a"/></svg><div style="position:absolute;left:339px;top:318px;width:343px;height:3px;background:#5a5a5a"></div><div style="position:absolute;left:339px;top:321px;width:343px;height:102px;background:#c9c9c9"></div><div style="position:absolute;left:339px;top:321px;width:343px;height:16px;background:linear-gradient(#a3a3a3,#929292)"></div><div style="position:absolute;left:339px;top:337px;width:343px;height:1px;background:#6c6c6c"></div><div style="position:absolute;left:339px;top:338px;width:343px;height:1px;background:#d8d8d8"></div><div style="position:absolute;left:339px;top:321px;width:43px;height:18px;background:linear-gradient(#cfcfcf,#cacaca)"></div><div class="t" style="left:346.50px;top:324.84px;font-size:10px;line-height:10px;font-weight:normal;color:#1c1c1c;letter-spacing:0.15px;-webkit-text-stroke:0.35px #1c1c1c;">Layers</div><div style="position:absolute;left:382px;top:321px;width:56px;height:17px;background:linear-gradient(#a6a6a6,#9c9c9c);border-left:1px solid #6e6e6e;border-right:1px solid #6e6e6e;border-bottom:1px solid #6c6c6c;box-sizing:border-box"></div><div class="t" style="left:389.50px;top:324.84px;font-size:10px;line-height:10px;font-weight:normal;color:#262626;letter-spacing:0.15px;-webkit-text-stroke:0.35px #262626;">Channels</div><div style="position:absolute;left:438px;top:321px;width:40px;height:17px;background:linear-gradient(#a6a6a6,#9c9c9c);border-left:1px solid #6e6e6e;border-right:1px solid #6e6e6e;border-bottom:1px solid #6c6c6c;box-sizing:border-box"></div><div class="t" style="left:445.50px;top:324.84px;font-size:10px;line-height:10px;font-weight:normal;color:#262626;letter-spacing:0.15px;-webkit-text-stroke:0.35px #262626;">Paths</div><svg style="position:absolute;left:665px;top:326px" width="14" height="9" viewBox="0 0 14 9"><path d="M0.5 2 L5.5 2 L3 5 Z" fill="#1c1c1c"/><rect x="6" y="0" width="8" height="1" fill="#1c1c1c"/><rect x="6" y="2" width="8" height="1" fill="#1c1c1c"/><rect x="6" y="4" width="8" height="1" fill="#1c1c1c"/><rect x="6" y="6" width="8" height="1" fill="#1c1c1c"/></svg><div style="position:absolute;left:343px;top:343px;width:64px;height:17px;background:linear-gradient(#f6f6f6,#e0e0e0);border:1px solid #7c7c7c;border-radius:2px;box-sizing:border-box"></div><svg style="position:absolute;left:349px;top:346px" width="11" height="10" viewBox="0 0 11 10"><circle cx="6.5" cy="4" r="3" fill="none" stroke="#1e1e1e" stroke-width="1.6"/><path d="M4.5 6 L1 9.5" stroke="#1e1e1e" stroke-width="2"/></svg><div class="t" style="left:364.50px;top:346.46px;font-size:9.5px;line-height:9.5px;font-weight:normal;color:#141414;-webkit-text-stroke:0.1px #141414;">Kind</div><svg style="position:absolute;left:396px;top:346px" width="7" height="11" viewBox="0 0 7 11"><path d="M0.5 4 L3.5 0.5 L6.5 4 Z M0.5 6.5 L6.5 6.5 L3.5 10 Z" fill="#2a2a2a"/></svg><svg style="position:absolute;left:418px;top:346px" width="13" height="11" viewBox="0 0 13 11"><rect x="0.5" y="0.5" width="12" height="10" fill="#e8e8e8" stroke="#222"/><path d="M2 9 L5 5 L7 7 L8.5 6 L11 9 Z" fill="#333"/><circle cx="9" cy="3.5" r="1.2" fill="#333"/></svg><svg style="position:absolute;left:442px;top:346px" width="11" height="11" viewBox="0 0 11 11"><circle cx="5.5" cy="5.5" r="4.6" fill="#333" stroke="#333"/><path d="M8.8 2.2 A4.6 4.6 0 0 1 2.2 8.8 Z" fill="#cfcfcf"/></svg><div class="t" style="left:466.00px;top:343.93px;font-size:14.5px;line-height:14.5px;font-weight:bold;color:#222;font-family:Liberation Serif,serif">T</div><svg style="position:absolute;left:490px;top:346px" width="12" height="12" viewBox="0 0 12 12"><rect x="1.5" y="1.5" width="9" height="9" fill="none" stroke="#222" stroke-width="1"/><rect x="0" y="0" width="3" height="3" fill="#222"/><rect x="0" y="9" width="3" height="3" fill="#222"/><rect x="9" y="0" width="3" height="3" fill="#222"/><rect x="9" y="9" width="3" height="3" fill="#222"/></svg><svg style="position:absolute;left:515px;top:346px" width="12" height="12" viewBox="0 0 12 12"><path d="M4.5 0.5 H9 L11.5 3 V8.5 H4.5 Z" fill="#e8e8e8" stroke="#222"/><rect x="0.5" y="5.5" width="6" height="6" fill="#e8e8e8" stroke="#222"/><rect x="6" y="5" width="4" height="3" fill="#222"/></svg><div style="position:absolute;left:540px;top:344px;width:9px;height:16px;background:linear-gradient(#dedede 0%,#c8c8c8 45%,#9a9a9a 50%,#a0a0a0 100%);border:1px solid #9a9a9a;box-sizing:border-box"></div><div style="position:absolute;left:339px;top:365px;width:343px;height:1px;background:#a6a6a6"></div><div style="position:absolute;left:339px;top:366px;width:343px;height:1px;background:#d6d6d6"></div><div style="position:absolute;left:343px;top:371px;width:115px;height:17px;background:linear-gradient(#f6f6f6,#e0e0e0);border:1px solid #7c7c7c;border-radius:2px;box-sizing:border-box"></div><div class="t" style="left:350.50px;top:374.96px;font-size:9.5px;line-height:9.5px;font-weight:normal;color:#141414;-webkit-text-stroke:0.1px #141414;">Normal</div><svg style="position:absolute;left:448px;top:374px" width="7" height="11" viewBox="0 0 7 11"><path d="M0.5 4 L3.5 0.5 L6.5 4 Z M0.5 6.5 L6.5 6.5 L3.5 10 Z" fill="#2a2a2a"/></svg><div class="t" style="left:462.00px;top:375.96px;font-size:9.5px;line-height:9.5px;font-weight:normal;color:#141414;-webkit-text-stroke:0.1px #141414;">Opacity:</div><div style="position:absolute;left:501px;top:372px;width:48px;height:16px;background:linear-gradient(#f6f6f6,#e0e0e0);border:1px solid #7c7c7c;border-radius:2px;box-sizing:border-box"></div><div style="position:absolute;left:532px;top:373px;width:1px;height:14px;background:#9a9a9a"></div><div class="t" style="left:506.00px;top:375.46px;font-size:9.5px;line-height:9.5px;font-weight:normal;color:#141414;-webkit-text-stroke:0.1px #141414;">100%</div><svg style="position:absolute;left:537px;top:378px" width="7" height="4" viewBox="0 0 7 4"><path d="M0 0 L6 0 L3 3.5 Z" fill="#333"/></svg><div style="position:absolute;left:339px;top:394px;width:343px;height:1px;background:#a6a6a6"></div><div style="position:absolute;left:339px;top:395px;width:343px;height:1px;background:#d6d6d6"></div><div class="t" style="left:344.50px;top:403.96px;font-size:9.5px;line-height:9.5px;font-weight:normal;color:#141414;-webkit-text-stroke:0.1px #141414;">Lock:</div><svg style="position:absolute;left:374px;top:403px" width="11" height="11" viewBox="0 0 11 11"><rect x="0.5" y="0.5" width="10" height="10" fill="#d0d0d0" stroke="#9a9a9a"/><path d="M3 3 H5.5 V5.5 H3 Z M5.5 5.5 H8 V8 H5.5 Z" fill="#b0b0b0"/></svg><svg style="position:absolute;left:394px;top:401px" width="17" height="13" viewBox="0 0 17 13"><path d="M16 0.5 L7 8" stroke="#a8a8a8" stroke-width="2"/><path d="M7 7.5 Q2 8 0.5 12.5 Q6 12.5 8 9 Z" fill="#a8a8a8"/></svg><svg style="position:absolute;left:417px;top:401px" width="14" height="14" viewBox="0 0 14 14"><path d="M7 0 L9.5 3 H8 V6 H11 V4.5 L14 7 L11 9.5 V8 H8 V11 H9.5 L7 14 L4.5 11 H6 V8 H3 V9.5 L0 7 L3 4.5 V6 H6 V3 H4.5 Z" fill="#1e1e1e"/></svg><svg style="position:absolute;left:441px;top:402px" width="11" height="12" viewBox="0 0 11 12"><path d="M2.5 5.5 V3.8 A3 3 0 0 1 8.5 3.8 V5.5" fill="none" stroke="#3a3a3a" stroke-width="1.6"/><rect x="1" y="5.5" width="9" height="6.5" fill="#3a3a3a"/><rect x="4.8" y="7.3" width="1.5" height="2.8" fill="#cfcfcf"/></svg><div class="t" style="left:483.00px;top:403.96px;font-size:9.5px;line-height:9.5px;font-weight:normal;color:#141414;-webkit-text-stroke:0.1px #141414;">Fill:</div><div style="position:absolute;left:501px;top:400px;width:48px;height:16px;background:linear-gradient(#f6f6f6,#e0e0e0);border:1px solid #7c7c7c;border-radius:2px;box-sizing:border-box"></div><div style="position:absolute;left:532px;top:401px;width:1px;height:14px;background:#9a9a9a"></div><div class="t" style="left:506.00px;top:403.46px;font-size:9.5px;line-height:9.5px;font-weight:normal;color:#141414;-webkit-text-stroke:0.1px #141414;">100%</div><svg style="position:absolute;left:537px;top:406px" width="7" height="4" viewBox="0 0 7 4"><path d="M0 0 L6 0 L3 3.5 Z" fill="#333"/></svg><div style="position:absolute;left:339px;top:423px;width:343px;height:1px;background:#8e8e8e"></div><div style="position:absolute;left:339px;top:424px;width:328px;height:60px;background:#c9c9c9"></div><div style="position:absolute;left:370px;top:424px;width:297px;height:60px;background:#afbee5"></div><div style="position:absolute;left:339px;top:484px;width:328px;height:1px;background:#9a9a9a"></div><div style="position:absolute;left:369px;top:424px;width:1px;height:61px;background:#9c9c9c"></div><svg style="position:absolute;left:347.5px;top:449px" width="13" height="10" viewBox="0 0 13 10"><path d="M0.9 4.5 Q6.3 -1.8 11.7 4.5 Q6.3 10.8 0.9 4.5 Z" fill="#b8b8b8" stroke="#333" stroke-width="1.5"/><circle cx="6.3" cy="4.5" r="2.4" fill="#3c3c3c"/></svg><svg style="position:absolute;left:405px;top:448px" width="17" height="14" viewBox="0 0 17 14"><rect x="0" y="0" width="17" height="14" fill="#333"/><rect x="1.0" y="1.0" width="4.3" height="3.2" fill="#e0e0e0"/><rect x="6.3" y="1.0" width="4.3" height="3.2" fill="#d8d8d8"/><rect x="11.6" y="1.0" width="4.3" height="3.2" fill="#b8b8b8"/><rect x="1.0" y="5.2" width="4.3" height="3.2" fill="#d0d0d0"/><rect x="6.3" y="5.2" width="4.3" height="3.2" fill="#c0c0c0"/><rect x="11.6" y="5.2" width="4.3" height="3.2" fill="#9a9a9a"/><rect x="1.0" y="9.4" width="4.3" height="3.2" fill="#b8b8b8"/><rect x="6.3" y="9.4" width="4.3" height="3.2" fill="#989898"/><rect x="11.6" y="9.4" width="4.3" height="3.2" fill="#707070"/></svg><svg style="position:absolute;left:456px;top:447.5px" width="8" height="15" viewBox="0 0 8 15"><rect x="1" y="1" width="6" height="12.5" rx="3" fill="none" stroke="#262626" stroke-width="1.7"/><rect x="0" y="5.6" width="8" height="2.2" fill="#afbee5"/><rect x="3.2" y="3.8" width="1.7" height="6" fill="#262626"/></svg><div style="position:absolute;left:468px;top:427px;width:80px;height:54px;background:#ebebeb;border:1px solid #1e1e1e;box-sizing:border-box"></div><div style="position:absolute;left:466px;top:425px;width:28px;height:1px;background:#1f2535"></div><div style="position:absolute;left:522px;top:425px;width:28px;height:1px;background:#1f2535"></div><div style="position:absolute;left:466px;top:482px;width:28px;height:1px;background:#1f2535"></div><div style="position:absolute;left:522px;top:482px;width:28px;height:1px;background:#1f2535"></div><div style="position:absolute;left:466px;top:425px;width:1px;height:19px;background:#1f2535"></div><div style="position:absolute;left:466px;top:464px;width:1px;height:19px;background:#1f2535"></div><div style="position:absolute;left:549px;top:425px;width:1px;height:19px;background:#1f2535"></div><div style="position:absolute;left:549px;top:464px;width:1px;height:19px;background:#1f2535"></div><div class="t" style="left:556.00px;top:451.26px;font-size:9.5px;line-height:9.5px;font-weight:normal;color:#141414;letter-spacing:0.2px;-webkit-text-stroke:0.1px #141414;">Color Lookup 1</div><div style="position:absolute;left:339px;top:485px;width:328px;height:60px;background:#c9c9c9"></div><div style="position:absolute;left:339px;top:545px;width:328px;height:1px;background:#9a9a9a"></div><div style="position:absolute;left:369px;top:485px;width:1px;height:61px;background:#9c9c9c"></div><svg style="position:absolute;left:347.5px;top:510px" width="13" height="10" viewBox="0 0 13 10"><path d="M0.9 4.5 Q6.3 -1.8 11.7 4.5 Q6.3 10.8 0.9 4.5 Z" fill="#b8b8b8" stroke="#333" stroke-width="1.5"/><circle cx="6.3" cy="4.5" r="2.4" fill="#3c3c3c"/></svg><div style="position:absolute;left:405px;top:508px;width:16px;height:14px;background:linear-gradient(90deg,#333,#ddd);border:1px solid #222;box-sizing:border-box"></div><svg style="position:absolute;left:456px;top:508.5px" width="8" height="15" viewBox="0 0 8 15"><rect x="1" y="1" width="6" height="12.5" rx="3" fill="none" stroke="#262626" stroke-width="1.7"/><rect x="0" y="5.6" width="8" height="2.2" fill="#c9c9c9"/><rect x="3.2" y="3.8" width="1.7" height="6" fill="#262626"/></svg><div style="position:absolute;left:468px;top:488px;width:80px;height:54px;background:#ebebeb;border:1px solid #1e1e1e;box-sizing:border-box"></div><div class="t" style="left:556.00px;top:512.26px;font-size:9.5px;line-height:9.5px;font-weight:normal;color:#141414;letter-spacing:0.2px;-webkit-text-stroke:0.1px #141414;">Gradient Map 1</div><div style="position:absolute;left:339px;top:546px;width:328px;height:60px;background:#c9c9c9"></div><div style="position:absolute;left:339px;top:606px;width:328px;height:1px;background:#9a9a9a"></div><div style="position:absolute;left:369px;top:546px;width:1px;height:61px;background:#9c9c9c"></div><svg style="position:absolute;left:347.5px;top:571px" width="13" height="10" viewBox="0 0 13 10"><path d="M0.9 4.5 Q6.3 -1.8 11.7 4.5 Q6.3 10.8 0.9 4.5 Z" fill="#b8b8b8" stroke="#333" stroke-width="1.5"/><circle cx="6.3" cy="4.5" r="2.4" fill="#3c3c3c"/></svg><div style="position:absolute;left:405px;top:569px;width:16px;height:14px;background:linear-gradient(90deg,#444,#ccc);border:1px solid #222;box-sizing:border-box"><div style="position:absolute;left:0;top:0;width:14px;height:6px;background:linear-gradient(#e0e0e0,#9a9a9a)"></div><div style="position:absolute;left:0;top:6px;width:14px;height:1px;background:#222"></div><div style="position:absolute;left:4px;top:0;width:1px;height:6px;background:#555"></div><div style="position:absolute;left:9px;top:0;width:1px;height:6px;background:#555"></div></div><svg style="position:absolute;left:456px;top:569.5px" width="8" height="15" viewBox="0 0 8 15"><rect x="1" y="1" width="6" height="12.5" rx="3" fill="none" stroke="#262626" stroke-width="1.7"/><rect x="0" y="5.6" width="8" height="2.2" fill="#c9c9c9"/><rect x="3.2" y="3.8" width="1.7" height="6" fill="#262626"/></svg><div style="position:absolute;left:468px;top:549px;width:80px;height:54px;background:#ebebeb;border:1px solid #1e1e1e;box-sizing:border-box"></div><div class="t" style="left:556.00px;top:573.26px;font-size:9.5px;line-height:9.5px;font-weight:normal;color:#141414;letter-spacing:0.2px;-webkit-text-stroke:0.1px #141414;">Hue/Saturation 1</div><div style="position:absolute;left:339px;top:607px;width:328px;height:60px;background:#c9c9c9"></div><div style="position:absolute;left:339px;top:667px;width:328px;height:1px;background:#9a9a9a"></div><div style="position:absolute;left:369px;top:607px;width:1px;height:61px;background:#9c9c9c"></div><svg style="position:absolute;left:347.5px;top:632px" width="13" height="10" viewBox="0 0 13 10"><path d="M0.9 4.5 Q6.3 -1.8 11.7 4.5 Q6.3 10.8 0.9 4.5 Z" fill="#b8b8b8" stroke="#333" stroke-width="1.5"/><circle cx="6.3" cy="4.5" r="2.4" fill="#3c3c3c"/></svg><div style="position:absolute;left:397px;top:621px;width:32px;height:32px;background:#f2f2f2;border:1px solid #222;box-sizing:border-box"><div style="position:absolute;left:0;top:0;width:30px;height:22px;background:linear-gradient(135deg,#000 0%,#222 22%,rgba(160,160,160,.35) 65%,rgba(230,230,230,0) 100%),repeating-conic-gradient(#c4c4c4 0% 25%,#ececec 0% 50%) 0 0/8px 8px"></div><div style="position:absolute;left:0;top:22px;width:30px;height:1px;background:#222"></div><div style="position:absolute;left:3px;top:25px;width:24px;height:1px;background:#222"></div><svg style="position:absolute;left:11px;top:25px" width="8" height="5"><path d="M1 4.5 L4 0.5 L7 4.5 Z" fill="none" stroke="#222" stroke-width="1"/></svg></div><svg style="position:absolute;left:456px;top:630.5px" width="8" height="15" viewBox="0 0 8 15"><rect x="1" y="1" width="6" height="12.5" rx="3" fill="none" stroke="#262626" stroke-width="1.7"/><rect x="0" y="5.6" width="8" height="2.2" fill="#c9c9c9"/><rect x="3.2" y="3.8" width="1.7" height="6" fill="#262626"/></svg><div style="position:absolute;left:468px;top:610px;width:80px;height:54px;background:#ebebeb;border:1px solid #1e1e1e;box-sizing:border-box"></div><div class="t" style="left:556.00px;top:634.26px;font-size:9.5px;line-height:9.5px;font-weight:normal;color:#141414;letter-spacing:0.2px;-webkit-text-stroke:0.1px #141414;">Gradient Fill 1 copy</div><div style="position:absolute;left:339px;top:668px;width:328px;height:60px;background:#c9c9c9"></div><div style="position:absolute;left:339px;top:728px;width:328px;height:1px;background:#9a9a9a"></div><div style="position:absolute;left:369px;top:668px;width:1px;height:61px;background:#9c9c9c"></div><svg style="position:absolute;left:347.5px;top:693px" width="13" height="10" viewBox="0 0 13 10"><path d="M0.9 4.5 Q6.3 -1.8 11.7 4.5 Q6.3 10.8 0.9 4.5 Z" fill="#b8b8b8" stroke="#333" stroke-width="1.5"/><circle cx="6.3" cy="4.5" r="2.4" fill="#3c3c3c"/></svg><svg style="position:absolute;left:456px;top:691.5px" width="8" height="15" viewBox="0 0 8 15"><rect x="1" y="1" width="6" height="12.5" rx="3" fill="none" stroke="#262626" stroke-width="1.7"/><rect x="0" y="5.6" width="8" height="2.2" fill="#c9c9c9"/><rect x="3.2" y="3.8" width="1.7" height="6" fill="#262626"/></svg><div style="position:absolute;left:468px;top:671px;width:80px;height:54px;background:#ebebeb;border:1px solid #1e1e1e;box-sizing:border-box"></div><div class="t" style="left:556.00px;top:695.26px;font-size:9.5px;line-height:9.5px;font-weight:normal;color:#141414;letter-spacing:0.2px;-webkit-text-stroke:0.1px #141414;"></div><div style="position:absolute;left:667px;top:424px;width:15px;height:245px;background:linear-gradient(90deg,#c6c6c6,#d0d0d0 20%,#c2c2c2 80%,#e8e8e8)"></div><div style="position:absolute;left:670px;top:425.5px;width:10px;height:260px;background:linear-gradient(90deg,#b2b2b2,#a2a2a2 40%,#8e8e8e);border-radius:5px"></div><div style="position:absolute;left:685px;top:5px;width:343px;height:11px;background:linear-gradient(#b0b0b0 0px,#9a9a9a 1.5px,#929292 60%,#868686 100%)"></div><div style="position:absolute;left:685px;top:16px;width:343px;height:1px;background:#555"></div><div style="position:absolute;left:685px;top:17px;width:343px;height:162px;background:#c9c9c9"></div><div style="position:absolute;left:685px;top:17px;width:343px;height:16px;background:linear-gradient(#a3a3a3,#929292)"></div><div style="position:absolute;left:685px;top:33px;width:343px;height:1px;background:#6c6c6c"></div><div style="position:absolute;left:685px;top:34px;width:343px;height:1px;background:#d8d8d8"></div><div style="position:absolute;left:685px;top:17px;width:58px;height:18px;background:linear-gradient(#cfcfcf,#cacaca)"></div><div class="t" style="left:692.50px;top:20.84px;font-size:10px;line-height:10px;font-weight:normal;color:#1c1c1c;letter-spacing:0.15px;-webkit-text-stroke:0.35px #1c1c1c;">Navigator</div><div style="position:absolute;left:743px;top:17px;width:62px;height:17px;background:linear-gradient(#a6a6a6,#9c9c9c);border-left:1px solid #6e6e6e;border-right:1px solid #6e6e6e;border-bottom:1px solid #6c6c6c;box-sizing:border-box"></div><div class="t" style="left:750.50px;top:20.84px;font-size:10px;line-height:10px;font-weight:normal;color:#262626;letter-spacing:0.15px;-webkit-text-stroke:0.35px #262626;">Histogram</div><svg style="position:absolute;left:1011px;top:22px" width="14" height="9" viewBox="0 0 14 9"><path d="M0.5 2 L5.5 2 L3 5 Z" fill="#1c1c1c"/><rect x="6" y="0" width="8" height="1" fill="#1c1c1c"/><rect x="6" y="2" width="8" height="1" fill="#1c1c1c"/><rect x="6" y="4" width="8" height="1" fill="#1c1c1c"/><rect x="6" y="6" width="8" height="1" fill="#1c1c1c"/></svg><div style="position:absolute;left:755.5px;top:39.5px;width:202px;height:135px;background:#161615;border:2px solid #de4350;box-sizing:border-box;overflow:hidden"><svg width="198" height="131" viewBox="0 0 198 131" style="position:absolute;left:0;top:0"><defs><filter id="nb" x="-20%" y="-20%" width="140%" height="140%"><feGaussianBlur stdDeviation="1.4"/></filter><filter id="nb2" x="-30%" y="-30%" width="160%" height="160%"><feGaussianBlur stdDeviation="4"/></filter></defs><rect width="198" height="131" fill="#151514"/><g filter="url(#nb2)"><ellipse cx="118" cy="15" rx="18" ry="18" fill="#29292a"/><ellipse cx="135" cy="116" rx="62" ry="12" fill="#3a3733"/><ellipse cx="30" cy="110" rx="28" ry="20" fill="#221e1c"/><ellipse cx="178" cy="85" rx="22" ry="40" fill="#332b28"/></g><g filter="url(#nb)"><polygon points="50,0 64,0 60,45 55,95 54,124 16,126 28,85 42,35" fill="#3a2f2a"/><polygon points="64,0 72,0 70,60 68,115 58,120 60,60" fill="#2e2825"/><polygon points="83,0 91,0 92,60 96,100 101,118 74,120 79,100 81,50" fill="#5a4942"/><polygon points="134,0 160,0 180,45 196,85 198,122 156,118 150,60" fill="#443a36"/><ellipse cx="111" cy="52" rx="6" ry="11" fill="#b4b4b4"/><ellipse cx="114" cy="62" rx="4" ry="5" fill="#8c8c8c"/><ellipse cx="128" cy="120" rx="50" ry="7" fill="#4a463f"/></g><filter id="ns" x="0" y="0" width="100%" height="100%"><feTurbulence type="fractalNoise" baseFrequency="0.35 0.03" numOctaves="2" seed="3"/><feColorMatrix type="matrix" values="0 0 0 0 0  0 0 0 0 0  0 0 0 0 0  0 0 0 -1.6 1.1"/></filter><rect width="198" height="131" filter="url(#ns)" opacity="0.22"/></svg></div><div style="position:absolute;left:685px;top:179px;width:343px;height:1px;background:#8c8c8c"></div><div style="position:absolute;left:685px;top:180px;width:343px;height:18px;background:linear-gradient(#d0d0d0,#c4c4c4)"></div><div style="position:absolute;left:685px;top:180px;width:57px;height:18px;background:linear-gradient(#f0f0f0,#e6e6e6)"></div><div style="position:absolute;left:742px;top:180px;width:1px;height:18px;background:#a8a8a8"></div><div class="t" style="left:687.50px;top:184.26px;font-size:9.5px;line-height:9.5px;font-weight:normal;color:#141414;-webkit-text-stroke:0.1px #141414;">21,89%</div><svg style="position:absolute;left:749px;top:187px" width="10" height="5" viewBox="0 0 10 5"><path d="M0.5 4.5 L3 1 L5 3.5 L6.5 2 L9.5 4.5 Z" fill="none" stroke="#222" stroke-width="1"/></svg><div style="position:absolute;left:774px;top:185px;width:203px;height:5px;background:linear-gradient(#9e9e9e,#b8b8b8);border:1px solid #8a8a8a;border-radius:3px;box-sizing:border-box"></div><svg style="position:absolute;left:849px;top:185px" width="11" height="11" viewBox="0 0 11 11"><path d="M0.5 10.5 L0.5 5.5 L5.5 0.5 L10.5 5.5 L10.5 10.5 Z" fill="#e2e2e2" stroke="#777"/></svg><svg style="position:absolute;left:987px;top:185px" width="18" height="7" viewBox="0 0 18 7"><path d="M0.5 6.5 L5 1 L8.5 4.5 L11.5 1 L17 6.5 Z" fill="none" stroke="#222" stroke-width="1.1"/></svg><svg style="position:absolute;left:1015px;top:187px" width="12" height="11" viewBox="0 0 12 11"><rect x="1" y="9" width="1.2" height="1.2" fill="#5a5a5a"/><rect x="3" y="7" width="1.2" height="1.2" fill="#5a5a5a"/><rect x="3" y="9" width="1.2" height="1.2" fill="#5a5a5a"/><rect x="5" y="5" width="1.2" height="1.2" fill="#5a5a5a"/><rect x="5" y="7" width="1.2" height="1.2" fill="#5a5a5a"/><rect x="5" y="9" width="1.2" height="1.2" fill="#5a5a5a"/><rect x="7" y="3" width="1.2" height="1.2" fill="#5a5a5a"/><rect x="7" y="5" width="1.2" height="1.2" fill="#5a5a5a"/><rect x="7" y="7" width="1.2" height="1.2" fill="#5a5a5a"/><rect x="7" y="9" width="1.2" height="1.2" fill="#5a5a5a"/><rect x="9" y="1" width="1.2" height="1.2" fill="#5a5a5a"/><rect x="9" y="3" width="1.2" height="1.2" fill="#5a5a5a"/><rect x="9" y="5" width="1.2" height="1.2" fill="#5a5a5a"/><rect x="9" y="7" width="1.2" height="1.2" fill="#5a5a5a"/><rect x="9" y="9" width="1.2" height="1.2" fill="#5a5a5a"/></svg><div style="position:absolute;left:685px;top:198px;width:343px;height:3px;background:#5a5a5a"></div><div style="position:absolute;left:685px;top:201px;width:343px;height:98px;background:#c9c9c9"></div><div style="position:absolute;left:685px;top:230px;width:328px;height:1px;background:#a4a4a4"></div><div style="position:absolute;left:690px;top:212.5px;width:13px;height:12px;background:#cdcdcd;border-left:1px solid #ededed;border-top:1px solid #e4e4e4;border-right:1px solid #8a8a8a;border-bottom:1px solid #8a8a8a;box-sizing:border-box"></div><svg style="position:absolute;left:717px;top:211px" width="15" height="16" viewBox="0 0 15 16"><path d="M0.5 2.5 H14 V14.5 H0.5 Z" fill="#f4f4f4" stroke="#1a1a1a" stroke-width="1.1"/><rect x="0.5" y="0.5" width="8.5" height="2" fill="#f4f4f4" stroke="#1a1a1a" stroke-width="1"/><rect x="2.5" y="5" width="10" height="1.1" fill="#1a1a1a"/><rect x="2.5" y="7" width="10" height="1.1" fill="#1a1a1a"/><rect x="2.5" y="9" width="10" height="1.1" fill="#1a1a1a"/><rect x="2.5" y="11" width="10" height="1.1" fill="#1a1a1a"/></svg><div class="t" style="left:742.50px;top:212.96px;font-size:9.5px;line-height:9.5px;font-weight:normal;color:#141414;letter-spacing:0.08px;-webkit-text-stroke:0.1px #141414;">Color Lookup 2 Layer</div><div style="position:absolute;left:685px;top:253px;width:328px;height:1px;background:#a4a4a4"></div><div style="position:absolute;left:690px;top:235.5px;width:13px;height:12px;background:#cdcdcd;border-left:1px solid #ededed;border-top:1px solid #e4e4e4;border-right:1px solid #8a8a8a;border-bottom:1px solid #8a8a8a;box-sizing:border-box"></div><svg style="position:absolute;left:717px;top:234px" width="15" height="16" viewBox="0 0 15 16"><path d="M0.5 2.5 H14 V14.5 H0.5 Z" fill="#f4f4f4" stroke="#1a1a1a" stroke-width="1.1"/><rect x="0.5" y="0.5" width="8.5" height="2" fill="#f4f4f4" stroke="#1a1a1a" stroke-width="1"/><rect x="2.5" y="5" width="10" height="1.1" fill="#1a1a1a"/><rect x="2.5" y="7" width="10" height="1.1" fill="#1a1a1a"/><rect x="2.5" y="9" width="10" height="1.1" fill="#1a1a1a"/><rect x="2.5" y="11" width="10" height="1.1" fill="#1a1a1a"/></svg><div class="t" style="left:742.50px;top:235.96px;font-size:9.5px;line-height:9.5px;font-weight:normal;color:#141414;letter-spacing:0.08px;-webkit-text-stroke:0.1px #141414;">Modify Color Lookup Layer</div><div style="position:absolute;left:685px;top:276px;width:328px;height:1px;background:#a4a4a4"></div><div style="position:absolute;left:690px;top:258.5px;width:13px;height:12px;background:#cdcdcd;border-left:1px solid #ededed;border-top:1px solid #e4e4e4;border-right:1px solid #8a8a8a;border-bottom:1px solid #8a8a8a;box-sizing:border-box"></div><svg style="position:absolute;left:717px;top:257px" width="15" height="16" viewBox="0 0 15 16"><path d="M0.5 2.5 H14 V14.5 H0.5 Z" fill="#f4f4f4" stroke="#1a1a1a" stroke-width="1.1"/><rect x="0.5" y="0.5" width="8.5" height="2" fill="#f4f4f4" stroke="#1a1a1a" stroke-width="1"/><rect x="2.5" y="5" width="10" height="1.1" fill="#1a1a1a"/><rect x="2.5" y="7" width="10" height="1.1" fill="#1a1a1a"/><rect x="2.5" y="9" width="10" height="1.1" fill="#1a1a1a"/><rect x="2.5" y="11" width="10" height="1.1" fill="#1a1a1a"/></svg><div class="t" style="left:742.50px;top:258.96px;font-size:9.5px;line-height:9.5px;font-weight:normal;color:#141414;letter-spacing:0.08px;-webkit-text-stroke:0.1px #141414;">Blending Change</div><div style="position:absolute;left:685px;top:277px;width:328px;height:22px;background:#afbee5"></div><div style="position:absolute;left:685px;top:299px;width:328px;height:1px;background:#a4a4a4"></div><div style="position:absolute;left:690px;top:281.5px;width:13px;height:12px;background:#b7c6e6;border-left:1px solid #ededed;border-top:1px solid #e4e4e4;border-right:1px solid #8a8a8a;border-bottom:1px solid #8a8a8a;box-sizing:border-box"></div><svg style="position:absolute;left:717px;top:280px" width="15" height="16" viewBox="0 0 15 16"><path d="M0.5 2.5 H14 V14.5 H0.5 Z" fill="#f4f4f4" stroke="#1a1a1a" stroke-width="1.1"/><rect x="0.5" y="0.5" width="8.5" height="2" fill="#f4f4f4" stroke="#1a1a1a" stroke-width="1"/><rect x="2.5" y="5" width="10" height="1.1" fill="#1a1a1a"/><rect x="2.5" y="7" width="10" height="1.1" fill="#1a1a1a"/><rect x="2.5" y="9" width="10" height="1.1" fill="#1a1a1a"/><rect x="2.5" y="11" width="10" height="1.1" fill="#1a1a1a"/></svg><div class="t" style="left:742.50px;top:281.96px;font-size:9.5px;line-height:9.5px;font-weight:normal;color:#141414;letter-spacing:0.08px;-webkit-text-stroke:0.1px #141414;">Master Opacity Change</div><div style="position:absolute;left:685px;top:201px;width:343px;height:16px;background:linear-gradient(#a3a3a3,#929292)"></div><div style="position:absolute;left:685px;top:217px;width:343px;height:1px;background:#6c6c6c"></div><div style="position:absolute;left:685px;top:218px;width:343px;height:1px;background:#d8d8d8"></div><div style="position:absolute;left:685px;top:201px;width:47px;height:18px;background:linear-gradient(#cfcfcf,#cacaca)"></div><div class="t" style="left:692.50px;top:204.84px;font-size:10px;line-height:10px;font-weight:normal;color:#1c1c1c;letter-spacing:0.15px;-webkit-text-stroke:0.35px #1c1c1c;">History</div><svg style="position:absolute;left:1011px;top:206px" width="14" height="9" viewBox="0 0 14 9"><path d="M0.5 2 L5.5 2 L3 5 Z" fill="#1c1c1c"/><rect x="6" y="0" width="8" height="1" fill="#1c1c1c"/><rect x="6" y="2" width="8" height="1" fill="#1c1c1c"/><rect x="6" y="4" width="8" height="1" fill="#1c1c1c"/><rect x="6" y="6" width="8" height="1" fill="#1c1c1c"/></svg><div style="position:absolute;left:1013px;top:219px;width:15px;height:80px;background:linear-gradient(90deg,#c8c8c8,#e6e6e6 55%,#d2d2d2)"></div><div style="position:absolute;left:1015px;top:277px;width:11px;height:20px;background:linear-gradient(90deg,#b2b2b2,#a2a2a2 40%,#8e8e8e);border-radius:5px"></div><div style="position:absolute;left:685px;top:299px;width:343px;height:19px;background:#cbcbcb"></div><svg style="position:absolute;left:924.5px;top:304px" width="15" height="12" viewBox="0 0 15 12"><path d="M4.5 0.5 H10 L13.5 4 V10.5 H4.5 Z" fill="#d8d8d8" stroke="#2a2a2a" stroke-width="1.1"/><path d="M10 0.5 V4 H13.5" fill="none" stroke="#2a2a2a" stroke-width="1"/><path d="M0 7 H7 M3.5 3.5 V11" stroke="#2a2a2a" stroke-width="2"/></svg><svg style="position:absolute;left:957px;top:304px" width="15" height="11" viewBox="0 0 15 11"><rect x="0.5" y="2" width="14" height="9" fill="#333"/><rect x="4" y="0" width="6" height="3" fill="#333"/><circle cx="7.5" cy="6.5" r="3" fill="#d0d0d0"/><circle cx="7.5" cy="6.5" r="1.6" fill="#333"/></svg><svg style="position:absolute;left:987px;top:302px" width="12" height="14" viewBox="0 0 12 14"><rect x="4" y="0.5" width="4" height="2" fill="none" stroke="#2a2a2a" stroke-width="1"/><rect x="0" y="2.5" width="12" height="1.6" fill="#2a2a2a"/><path d="M1.8 4.8 H10.2 L9.8 13.2 H2.2 Z" fill="none" stroke="#2a2a2a" stroke-width="1.1"/><rect x="3.6" y="5.5" width="1.2" height="7" fill="#2a2a2a"/><rect x="5.5" y="5.5" width="1.2" height="7" fill="#2a2a2a"/><rect x="7.3" y="5.5" width="1.2" height="7" fill="#2a2a2a"/></svg><svg style="position:absolute;left:1015px;top:305px" width="12" height="11" viewBox="0 0 12 11"><rect x="1" y="9" width="1.2" height="1.2" fill="#5a5a5a"/><rect x="3" y="7" width="1.2" height="1.2" fill="#5a5a5a"/><rect x="3" y="9" width="1.2" height="1.2" fill="#5a5a5a"/><rect x="5" y="5" width="1.2" height="1.2" fill="#5a5a5a"/><rect x="5" y="7" width="1.2" height="1.2" fill="#5a5a5a"/><rect x="5" y="9" width="1.2" height="1.2" fill="#5a5a5a"/><rect x="7" y="3" width="1.2" height="1.2" fill="#5a5a5a"/><rect x="7" y="5" width="1.2" height="1.2" fill="#5a5a5a"/><rect x="7" y="7" width="1.2" height="1.2" fill="#5a5a5a"/><rect x="7" y="9" width="1.2" height="1.2" fill="#5a5a5a"/><rect x="9" y="1" width="1.2" height="1.2" fill="#5a5a5a"/><rect x="9" y="3" width="1.2" height="1.2" fill="#5a5a5a"/><rect x="9" y="5" width="1.2" height="1.2" fill="#5a5a5a"/><rect x="9" y="7" width="1.2" height="1.2" fill="#5a5a5a"/><rect x="9" y="9" width="1.2" height="1.2" fill="#5a5a5a"/></svg><div style="position:absolute;left:685px;top:318px;width:343px;height:3px;background:#5a5a5a"></div><div style="position:absolute;left:685px;top:321px;width:343px;height:102px;background:#c9c9c9"></div><div style="position:absolute;left:685px;top:321px;width:343px;height:16px;background:linear-gradient(#a3a3a3,#929292)"></div><div style="position:absolute;left:685px;top:337px;width:343px;height:1px;background:#6c6c6c"></div><div style="position:absolute;left:685px;top:338px;width:343px;height:1px;background:#d8d8d8"></div><div style="position:absolute;left:685px;top:321px;width:43px;height:18px;background:linear-gradient(#cfcfcf,#cacaca)"></div><div class="t" style="left:692.50px;top:324.84px;font-size:10px;line-height:10px;font-weight:normal;color:#1c1c1c;letter-spacing:0.15px;-webkit-text-stroke:0.35px #1c1c1c;">Layers</div><div style="position:absolute;left:728px;top:321px;width:56px;height:17px;background:linear-gradient(#a6a6a6,#9c9c9c);border-left:1px solid #6e6e6e;border-right:1px solid #6e6e6e;border-bottom:1px solid #6c6c6c;box-sizing:border-box"></div><div class="t" style="left:735.50px;top:324.84px;font-size:10px;line-height:10px;font-weight:normal;color:#262626;letter-spacing:0.15px;-webkit-text-stroke:0.35px #262626;">Channels</div><div style="position:absolute;left:784px;top:321px;width:40px;height:17px;background:linear-gradient(#a6a6a6,#9c9c9c);border-left:1px solid #6e6e6e;border-right:1px solid #6e6e6e;border-bottom:1px solid #6c6c6c;box-sizing:border-box"></div><div class="t" style="left:791.50px;top:324.84px;font-size:10px;line-height:10px;font-weight:normal;color:#262626;letter-spacing:0.15px;-webkit-text-stroke:0.35px #262626;">Paths</div><svg style="position:absolute;left:1011px;top:326px" width="14" height="9" viewBox="0 0 14 9"><path d="M0.5 2 L5.5 2 L3 5 Z" fill="#1c1c1c"/><rect x="6" y="0" width="8" height="1" fill="#1c1c1c"/><rect x="6" y="2" width="8" height="1" fill="#1c1c1c"/><rect x="6" y="4" width="8" height="1" fill="#1c1c1c"/><rect x="6" y="6" width="8" height="1" fill="#1c1c1c"/></svg><div style="position:absolute;left:689px;top:343px;width:64px;height:17px;background:linear-gradient(#f6f6f6,#e0e0e0);border:1px solid #7c7c7c;border-radius:2px;box-sizing:border-box"></div><svg style="position:absolute;left:695px;top:346px" width="11" height="10" viewBox="0 0 11 10"><circle cx="6.5" cy="4" r="3" fill="none" stroke="#1e1e1e" stroke-width="1.6"/><path d="M4.5 6 L1 9.5" stroke="#1e1e1e" stroke-width="2"/></svg><div class="t" style="left:710.50px;top:346.46px;font-size:9.5px;line-height:9.5px;font-weight:normal;color:#141414;-webkit-text-stroke:0.1px #141414;">Kind</div><svg style="position:absolute;left:742px;top:346px" width="7" height="11" viewBox="0 0 7 11"><path d="M0.5 4 L3.5 0.5 L6.5 4 Z M0.5 6.5 L6.5 6.5 L3.5 10 Z" fill="#2a2a2a"/></svg><svg style="position:absolute;left:764px;top:346px" width="13" height="11" viewBox="0 0 13 11"><rect x="0.5" y="0.5" width="12" height="10" fill="#e8e8e8" stroke="#222"/><path d="M2 9 L5 5 L7 7 L8.5 6 L11 9 Z" fill="#333"/><circle cx="9" cy="3.5" r="1.2" fill="#333"/></svg><svg style="position:absolute;left:788px;top:346px" width="11" height="11" viewBox="0 0 11 11"><circle cx="5.5" cy="5.5" r="4.6" fill="#333" stroke="#333"/><path d="M8.8 2.2 A4.6 4.6 0 0 1 2.2 8.8 Z" fill="#cfcfcf"/></svg><div class="t" style="left:812.00px;top:343.93px;font-size:14.5px;line-height:14.5px;font-weight:bold;color:#222;font-family:Liberation Serif,serif">T</div><svg style="position:absolute;left:836px;top:346px" width="12" height="12" viewBox="0 0 12 12"><rect x="1.5" y="1.5" width="9" height="9" fill="none" stroke="#222" stroke-width="1"/><rect x="0" y="0" width="3" height="3" fill="#222"/><rect x="0" y="9" width="3" height="3" fill="#222"/><rect x="9" y="0" width="3" height="3" fill="#222"/><rect x="9" y="9" width="3" height="3" fill="#222"/></svg><svg style="position:absolute;left:861px;top:346px" width="12" height="12" viewBox="0 0 12 12"><path d="M4.5 0.5 H9 L11.5 3 V8.5 H4.5 Z" fill="#e8e8e8" stroke="#222"/><rect x="0.5" y="5.5" width="6" height="6" fill="#e8e8e8" stroke="#222"/><rect x="6" y="5" width="4" height="3" fill="#222"/></svg><div style="position:absolute;left:886px;top:344px;width:9px;height:16px;background:linear-gradient(#dedede 0%,#c8c8c8 45%,#9a9a9a 50%,#a0a0a0 100%);border:1px solid #9a9a9a;box-sizing:border-box"></div><div style="position:absolute;left:685px;top:365px;width:343px;height:1px;background:#a6a6a6"></div><div style="position:absolute;left:685px;top:366px;width:343px;height:1px;background:#d6d6d6"></div><div style="position:absolute;left:689px;top:371px;width:115px;height:17px;background:linear-gradient(#f6f6f6,#e0e0e0);border:1px solid #7c7c7c;border-radius:2px;box-sizing:border-box"></div><div class="t" style="left:696.50px;top:374.96px;font-size:9.5px;line-height:9.5px;font-weight:normal;color:#141414;-webkit-text-stroke:0.1px #141414;">Hard Light</div><svg style="position:absolute;left:794px;top:374px" width="7" height="11" viewBox="0 0 7 11"><path d="M0.5 4 L3.5 0.5 L6.5 4 Z M0.5 6.5 L6.5 6.5 L3.5 10 Z" fill="#2a2a2a"/></svg><div class="t" style="left:808.00px;top:375.96px;font-size:9.5px;line-height:9.5px;font-weight:normal;color:#141414;-webkit-text-stroke:0.1px #141414;">Opacity:</div><div style="position:absolute;left:845px;top:370px;width:52px;height:20px;background:#c4cde0;border-radius:3px"></div><div style="position:absolute;left:847px;top:372px;width:48px;height:16px;background:linear-gradient(#f6f6f6,#e0e0e0);border:1px solid #7c7c7c;border-radius:2px;box-sizing:border-box"></div><div style="position:absolute;left:878px;top:373px;width:1px;height:14px;background:#9a9a9a"></div><div class="t" style="left:852.00px;top:375.46px;font-size:9.5px;line-height:9.5px;font-weight:normal;color:#141414;-webkit-text-stroke:0.1px #141414;">13</div><div style="position:absolute;left:861.5px;top:374px;width:1px;height:12px;background:#111"></div><svg style="position:absolute;left:883px;top:378px" width="7" height="4" viewBox="0 0 7 4"><path d="M0 0 L6 0 L3 3.5 Z" fill="#333"/></svg><div style="position:absolute;left:685px;top:394px;width:343px;height:1px;background:#a6a6a6"></div><div style="position:absolute;left:685px;top:395px;width:343px;height:1px;background:#d6d6d6"></div><div class="t" style="left:690.50px;top:403.96px;font-size:9.5px;line-height:9.5px;font-weight:normal;color:#141414;-webkit-text-stroke:0.1px #141414;">Lock:</div><svg style="position:absolute;left:720px;top:403px" width="11" height="11" viewBox="0 0 11 11"><rect x="0.5" y="0.5" width="10" height="10" fill="#d0d0d0" stroke="#9a9a9a"/><path d="M3 3 H5.5 V5.5 H3 Z M5.5 5.5 H8 V8 H5.5 Z" fill="#b0b0b0"/></svg><svg style="position:absolute;left:740px;top:401px" width="17" height="13" viewBox="0 0 17 13"><path d="M16 0.5 L7 8" stroke="#a8a8a8" stroke-width="2"/><path d="M7 7.5 Q2 8 0.5 12.5 Q6 12.5 8 9 Z" fill="#a8a8a8"/></svg><div style="position:absolute;left:760px;top:397px;width:20px;height:22px;background:linear-gradient(#e2e2e2,#d4d4d4);border:1px solid #8e8e8e;border-radius:2px;box-sizing:border-box"></div><svg style="position:absolute;left:763px;top:401px" width="14" height="14" viewBox="0 0 14 14"><path d="M7 0 L9.5 3 H8 V6 H11 V4.5 L14 7 L11 9.5 V8 H8 V11 H9.5 L7 14 L4.5 11 H6 V8 H3 V9.5 L0 7 L3 4.5 V6 H6 V3 H4.5 Z" fill="#1e1e1e"/></svg><svg style="position:absolute;left:787px;top:402px" width="11" height="12" viewBox="0 0 11 12"><path d="M2.5 5.5 V3.8 A3 3 0 0 1 8.5 3.8 V5.5" fill="none" stroke="#3a3a3a" stroke-width="1.6"/><rect x="1" y="5.5" width="9" height="6.5" fill="#3a3a3a"/><rect x="4.8" y="7.3" width="1.5" height="2.8" fill="#cfcfcf"/></svg><div class="t" style="left:829.00px;top:403.96px;font-size:9.5px;line-height:9.5px;font-weight:normal;color:#141414;-webkit-text-stroke:0.1px #141414;">Fill:</div><div style="position:absolute;left:847px;top:400px;width:48px;height:16px;background:linear-gradient(#f6f6f6,#e0e0e0);border:1px solid #7c7c7c;border-radius:2px;box-sizing:border-box"></div><div style="position:absolute;left:878px;top:401px;width:1px;height:14px;background:#9a9a9a"></div><div class="t" style="left:852.00px;top:403.46px;font-size:9.5px;line-height:9.5px;font-weight:normal;color:#141414;-webkit-text-stroke:0.1px #141414;">100%</div><svg style="position:absolute;left:883px;top:406px" width="7" height="4" viewBox="0 0 7 4"><path d="M0 0 L6 0 L3 3.5 Z" fill="#333"/></svg><div style="position:absolute;left:685px;top:423px;width:343px;height:1px;background:#8e8e8e"></div><div style="position:absolute;left:685px;top:424px;width:328px;height:60px;background:#c9c9c9"></div><div style="position:absolute;left:716px;top:424px;width:297px;height:60px;background:#afbee5"></div><div style="position:absolute;left:685px;top:484px;width:328px;height:1px;background:#9a9a9a"></div><div style="position:absolute;left:715px;top:424px;width:1px;height:61px;background:#9c9c9c"></div><svg style="position:absolute;left:693.5px;top:449px" width="13" height="10" viewBox="0 0 13 10"><path d="M0.9 4.5 Q6.3 -1.8 11.7 4.5 Q6.3 10.8 0.9 4.5 Z" fill="#b8b8b8" stroke="#333" stroke-width="1.5"/><circle cx="6.3" cy="4.5" r="2.4" fill="#3c3c3c"/></svg><svg style="position:absolute;left:751px;top:448px" width="17" height="14" viewBox="0 0 17 14"><rect x="0" y="0" width="17" height="14" fill="#333"/><rect x="1.0" y="1.0" width="4.3" height="3.2" fill="#e0e0e0"/><rect x="6.3" y="1.0" width="4.3" height="3.2" fill="#d8d8d8"/><rect x="11.6" y="1.0" width="4.3" height="3.2" fill="#b8b8b8"/><rect x="1.0" y="5.2" width="4.3" height="3.2" fill="#d0d0d0"/><rect x="6.3" y="5.2" width="4.3" height="3.2" fill="#c0c0c0"/><rect x="11.6" y="5.2" width="4.3" height="3.2" fill="#9a9a9a"/><rect x="1.0" y="9.4" width="4.3" height="3.2" fill="#b8b8b8"/><rect x="6.3" y="9.4" width="4.3" height="3.2" fill="#989898"/><rect x="11.6" y="9.4" width="4.3" height="3.2" fill="#707070"/></svg><svg style="position:absolute;left:802px;top:447.5px" width="8" height="15" viewBox="0 0 8 15"><rect x="1" y="1" width="6" height="12.5" rx="3" fill="none" stroke="#262626" stroke-width="1.7"/><rect x="0" y="5.6" width="8" height="2.2" fill="#afbee5"/><rect x="3.2" y="3.8" width="1.7" height="6" fill="#262626"/></svg><div style="position:absolute;left:814px;top:427px;width:80px;height:54px;background:#ebebeb;border:1px solid #1e1e1e;box-sizing:border-box"></div><div style="position:absolute;left:812px;top:425px;width:28px;height:1px;background:#1f2535"></div><div style="position:absolute;left:868px;top:425px;width:28px;height:1px;background:#1f2535"></div><div style="position:absolute;left:812px;top:482px;width:28px;height:1px;background:#1f2535"></div><div style="position:absolute;left:868px;top:482px;width:28px;height:1px;background:#1f2535"></div><div style="position:absolute;left:812px;top:425px;width:1px;height:19px;background:#1f2535"></div><div style="position:absolute;left:812px;top:464px;width:1px;height:19px;background:#1f2535"></div><div style="position:absolute;left:895px;top:425px;width:1px;height:19px;background:#1f2535"></div><div style="position:absolute;left:895px;top:464px;width:1px;height:19px;background:#1f2535"></div><div class="t" style="left:902.00px;top:451.26px;font-size:9.5px;line-height:9.5px;font-weight:normal;color:#141414;letter-spacing:0.2px;-webkit-text-stroke:0.1px #141414;">Color Lookup 2</div><div style="position:absolute;left:685px;top:485px;width:328px;height:60px;background:#c9c9c9"></div><div style="position:absolute;left:685px;top:545px;width:328px;height:1px;background:#9a9a9a"></div><div style="position:absolute;left:715px;top:485px;width:1px;height:61px;background:#9c9c9c"></div><svg style="position:absolute;left:693.5px;top:510px" width="13" height="10" viewBox="0 0 13 10"><path d="M0.9 4.5 Q6.3 -1.8 11.7 4.5 Q6.3 10.8 0.9 4.5 Z" fill="#b8b8b8" stroke="#333" stroke-width="1.5"/><circle cx="6.3" cy="4.5" r="2.4" fill="#3c3c3c"/></svg><svg style="position:absolute;left:751px;top:509px" width="17" height="14" viewBox="0 0 17 14"><rect x="0" y="0" width="17" height="14" fill="#333"/><rect x="1.0" y="1.0" width="4.3" height="3.2" fill="#e0e0e0"/><rect x="6.3" y="1.0" width="4.3" height="3.2" fill="#d8d8d8"/><rect x="11.6" y="1.0" width="4.3" height="3.2" fill="#b8b8b8"/><rect x="1.0" y="5.2" width="4.3" height="3.2" fill="#d0d0d0"/><rect x="6.3" y="5.2" width="4.3" height="3.2" fill="#c0c0c0"/><rect x="11.6" y="5.2" width="4.3" height="3.2" fill="#9a9a9a"/><rect x="1.0" y="9.4" width="4.3" height="3.2" fill="#b8b8b8"/><rect x="6.3" y="9.4" width="4.3" height="3.2" fill="#989898"/><rect x="11.6" y="9.4" width="4.3" height="3.2" fill="#707070"/></svg><svg style="position:absolute;left:802px;top:508.5px" width="8" height="15" viewBox="0 0 8 15"><rect x="1" y="1" width="6" height="12.5" rx="3" fill="none" stroke="#262626" stroke-width="1.7"/><rect x="0" y="5.6" width="8" height="2.2" fill="#c9c9c9"/><rect x="3.2" y="3.8" width="1.7" height="6" fill="#262626"/></svg><div style="position:absolute;left:814px;top:488px;width:80px;height:54px;background:#ebebeb;border:1px solid #1e1e1e;box-sizing:border-box"></div><div class="t" style="left:902.00px;top:512.26px;font-size:9.5px;line-height:9.5px;font-weight:normal;color:#141414;letter-spacing:0.2px;-webkit-text-stroke:0.1px #141414;">Color Lookup 1</div><div style="position:absolute;left:685px;top:546px;width:328px;height:60px;background:#c9c9c9"></div><div style="position:absolute;left:685px;top:606px;width:328px;height:1px;background:#9a9a9a"></div><div style="position:absolute;left:715px;top:546px;width:1px;height:61px;background:#9c9c9c"></div><svg style="position:absolute;left:693.5px;top:571px" width="13" height="10" viewBox="0 0 13 10"><path d="M0.9 4.5 Q6.3 -1.8 11.7 4.5 Q6.3 10.8 0.9 4.5 Z" fill="#b8b8b8" stroke="#333" stroke-width="1.5"/><circle cx="6.3" cy="4.5" r="2.4" fill="#3c3c3c"/></svg><div style="position:absolute;left:751px;top:569px;width:16px;height:14px;background:linear-gradient(90deg,#333,#ddd);border:1px solid #222;box-sizing:border-box"></div><svg style="position:absolute;left:802px;top:569.5px" width="8" height="15" viewBox="0 0 8 15"><rect x="1" y="1" width="6" height="12.5" rx="3" fill="none" stroke="#262626" stroke-width="1.7"/><rect x="0" y="5.6" width="8" height="2.2" fill="#c9c9c9"/><rect x="3.2" y="3.8" width="1.7" height="6" fill="#262626"/></svg><div style="position:absolute;left:814px;top:549px;width:80px;height:54px;background:#ebebeb;border:1px solid #1e1e1e;box-sizing:border-box"></div><div class="t" style="left:902.00px;top:573.26px;font-size:9.5px;line-height:9.5px;font-weight:normal;color:#141414;letter-spacing:0.2px;-webkit-text-stroke:0.1px #141414;">Gradient Map 1</div><div style="position:absolute;left:685px;top:607px;width:328px;height:60px;background:#c9c9c9"></div><div style="position:absolute;left:685px;top:667px;width:328px;height:1px;background:#9a9a9a"></div><div style="position:absolute;left:715px;top:607px;width:1px;height:61px;background:#9c9c9c"></div><svg style="position:absolute;left:693.5px;top:632px" width="13" height="10" viewBox="0 0 13 10"><path d="M0.9 4.5 Q6.3 -1.8 11.7 4.5 Q6.3 10.8 0.9 4.5 Z" fill="#b8b8b8" stroke="#333" stroke-width="1.5"/><circle cx="6.3" cy="4.5" r="2.4" fill="#3c3c3c"/></svg><div style="position:absolute;left:751px;top:630px;width:16px;height:14px;background:linear-gradient(90deg,#444,#ccc);border:1px solid #222;box-sizing:border-box"><div style="position:absolute;left:0;top:0;width:14px;height:6px;background:linear-gradient(#e0e0e0,#9a9a9a)"></div><div style="position:absolute;left:0;top:6px;width:14px;height:1px;background:#222"></div><div style="position:absolute;left:4px;top:0;width:1px;height:6px;background:#555"></div><div style="position:absolute;left:9px;top:0;width:1px;height:6px;background:#555"></div></div><svg style="position:absolute;left:802px;top:630.5px" width="8" height="15" viewBox="0 0 8 15"><rect x="1" y="1" width="6" height="12.5" rx="3" fill="none" stroke="#262626" stroke-width="1.7"/><rect x="0" y="5.6" width="8" height="2.2" fill="#c9c9c9"/><rect x="3.2" y="3.8" width="1.7" height="6" fill="#262626"/></svg><div style="position:absolute;left:814px;top:610px;width:80px;height:54px;background:#ebebeb;border:1px solid #1e1e1e;box-sizing:border-box"></div><div class="t" style="left:902.00px;top:634.26px;font-size:9.5px;line-height:9.5px;font-weight:normal;color:#141414;letter-spacing:0.2px;-webkit-text-stroke:0.1px #141414;">Hue/Saturation 1</div><div style="position:absolute;left:685px;top:668px;width:328px;height:60px;background:#c9c9c9"></div><div style="position:absolute;left:685px;top:728px;width:328px;height:1px;background:#9a9a9a"></div><div style="position:absolute;left:715px;top:668px;width:1px;height:61px;background:#9c9c9c"></div><svg style="position:absolute;left:693.5px;top:693px" width="13" height="10" viewBox="0 0 13 10"><path d="M0.9 4.5 Q6.3 -1.8 11.7 4.5 Q6.3 10.8 0.9 4.5 Z" fill="#b8b8b8" stroke="#333" stroke-width="1.5"/><circle cx="6.3" cy="4.5" r="2.4" fill="#3c3c3c"/></svg><svg style="position:absolute;left:802px;top:691.5px" width="8" height="15" viewBox="0 0 8 15"><rect x="1" y="1" width="6" height="12.5" rx="3" fill="none" stroke="#262626" stroke-width="1.7"/><rect x="0" y="5.6" width="8" height="2.2" fill="#c9c9c9"/><rect x="3.2" y="3.8" width="1.7" height="6" fill="#262626"/></svg><div style="position:absolute;left:814px;top:671px;width:80px;height:54px;background:#ebebeb;border:1px solid #1e1e1e;box-sizing:border-box"></div><div class="t" style="left:902.00px;top:695.26px;font-size:9.5px;line-height:9.5px;font-weight:normal;color:#141414;letter-spacing:0.2px;-webkit-text-stroke:0.1px #141414;"></div><div style="position:absolute;left:1013px;top:424px;width:15px;height:245px;background:linear-gradient(90deg,#c6c6c6,#d0d0d0 20%,#c2c2c2 80%,#e8e8e8)"></div><div style="position:absolute;left:1016px;top:425.5px;width:10px;height:260px;background:linear-gradient(90deg,#b2b2b2,#a2a2a2 40%,#8e8e8e);border-radius:5px"></div><svg style="position:absolute;left:759px;top:396px" width="14" height="20" viewBox="0 0 14 20"><path d="M1 1 L1 15 L4.5 11.5 L7 17 L9 16 L6.5 10.5 L11 10.5 Z" fill="#111" stroke="#f0f0f0" stroke-width="0.8"/></svg><svg style="position:absolute;left:187px;top:246px" width="14" height="20" viewBox="0 0 14 20"><path d="M1 1 L1 15 L4.5 11.5 L7 17 L9 16 L6.5 10.5 L11 10.5 Z" fill="#111" stroke="#f0f0f0" stroke-width="1"/></svg>
</body></html>
